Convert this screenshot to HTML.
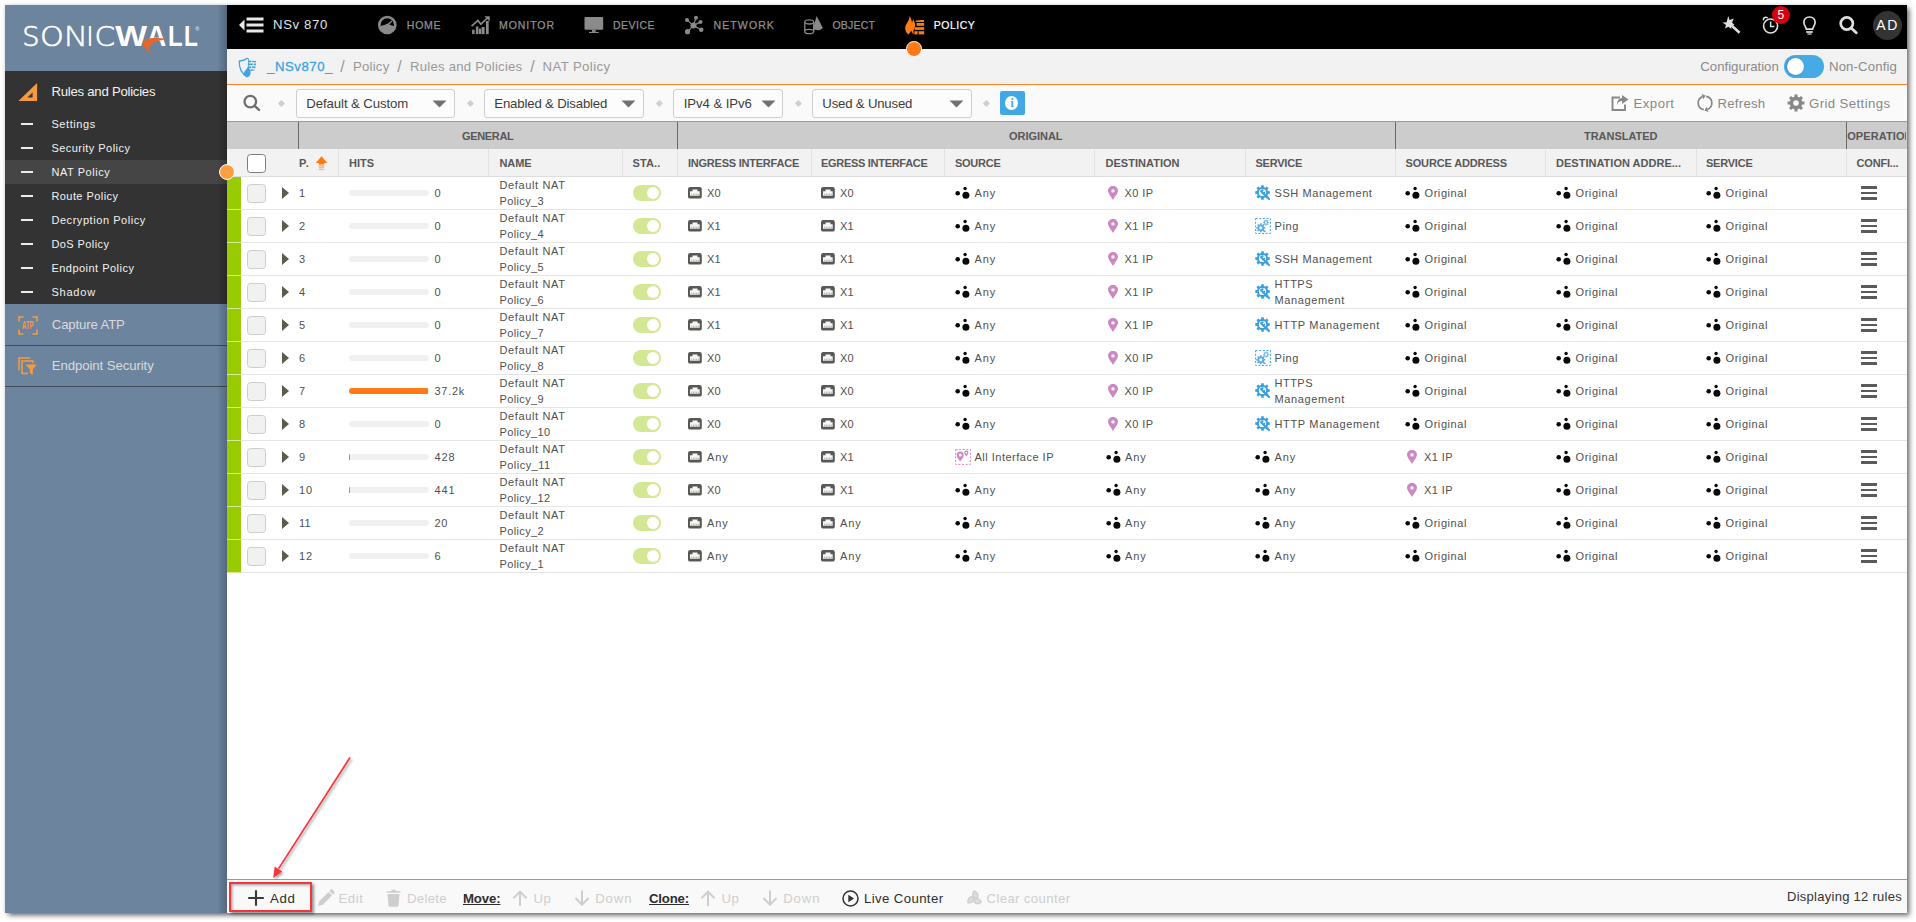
<!DOCTYPE html>
<html><head><meta charset="utf-8"><title>NAT Policy</title>
<style>
html,body{margin:0;padding:0}
body{width:1916px;height:922px;background:#fff;position:relative;overflow:hidden;font-family:"Liberation Sans",sans-serif}
#app{position:absolute;left:5px;top:5px;width:1902px;height:908px;background:#fff;box-shadow:2.5px 2.5px 5px rgba(0,0,0,.55),0 0 4px rgba(0,0,0,.15)}
.b{position:absolute;display:block}
.t{position:absolute;white-space:nowrap}
</style></head><body><div id="app">
<div class="b" style="left:0.00px;top:0.00px;width:222.00px;height:908.00px;background:#6d849f"></div>
<div class="b" style="left:0.00px;top:66.00px;width:222.00px;height:233.00px;background:#333"></div>
<div class="b" style="left:0.00px;top:155.00px;width:222.00px;height:24.00px;background:#454545"></div>
<div class="b" style="left:0.00px;top:339.80px;width:222.00px;height:1.30px;background:#434b55"></div>
<div class="b" style="left:0.00px;top:380.80px;width:222.00px;height:1.30px;background:#434b55"></div>
<div class="b" style="left:212.00px;top:0.00px;width:10.00px;height:908.00px;background:linear-gradient(to right, rgba(0,0,0,0), rgba(0,0,0,.22))"></div>
<svg class="b" style="left:0.00px;top:0.00px;" width="222" height="66" viewBox="0 0 222 66"><text transform="translate(17.18 41.20) scale(1.3578 1.3272)" font-family="'DejaVu Sans','Liberation Sans',sans-serif" font-weight="200" font-size="20.0" fill="#fff" stroke="#fff" stroke-width="0.5">S</text><text transform="translate(35.12 41.20) scale(1.5144 1.3272)" font-family="'DejaVu Sans','Liberation Sans',sans-serif" font-weight="200" font-size="20.0" fill="#fff" stroke="#fff" stroke-width="0.5">O</text><text transform="translate(58.48 41.20) scale(1.6632 1.3357)" font-family="'DejaVu Sans','Liberation Sans',sans-serif" font-weight="200" font-size="20.0" fill="#fff" stroke="#fff" stroke-width="0.25">N</text><text transform="translate(79.49 41.20) scale(1.8627 1.3443)" font-family="'DejaVu Sans','Liberation Sans',sans-serif" font-weight="200" font-size="20.0" fill="#fff">I</text><text transform="translate(89.46 41.20) scale(1.4706 1.3272)" font-family="'DejaVu Sans','Liberation Sans',sans-serif" font-weight="200" font-size="20.0" fill="#fff" stroke="#fff" stroke-width="0.5">C</text><text transform="translate(110.27 41.20) scale(1.6879 1.4608)" font-family="'Liberation Sans',sans-serif" font-weight="700" font-size="20.0" fill="#fff">W</text><text transform="translate(141.61 41.20) scale(1.3711 1.4608)" font-family="'Liberation Sans',sans-serif" font-weight="700" font-size="20.0" fill="#fff">A</text><text transform="translate(162.99 41.20) scale(1.1988 1.4608)" font-family="'Liberation Sans',sans-serif" font-weight="700" font-size="20.0" fill="#fff">L</text><text transform="translate(178.97 41.20) scale(1.1404 1.4608)" font-family="'Liberation Sans',sans-serif" font-weight="700" font-size="20.0" fill="#fff">L</text><path d="M149 46.6 L152 46.6 L153 43 L150 43 Z" fill="#6d849f" transform="translate(-5 -5)"/><path transform="translate(-5 -5)" d="M142.2 43.6 C143.5 41 146 39 151.3 38.1 C156 37.6 162 38 167.8 39.1 C162 40 157.5 41 155 42 C151.5 43.8 149 46 148.7 47.7 C148.7 51 152 53.8 156.5 55.6 C151 54 146.5 50 144 46.7 C143 45.5 142.4 44.5 142.2 43.6 Z" fill="#e4682a"/><text x="190.3" y="25.8" font-size="5.5" fill="#e8edf2" font-family="Liberation Sans, sans-serif">®</text></svg>
<svg class="b" style="left:12.00px;top:77.00px;" width="22" height="21" viewBox="0 0 22 21"><path d="M20.1 1.1 L20.1 19 L1.4 19 Z M15.6 10.6 L15.6 15.5 L10.4 15.5 Z" fill="#f79a3e" fill-rule="evenodd"/></svg>
<div class="t" style="left:46.40px;top:76.90px;height:20px;line-height:20px;font-size:13.2px;color:#f2f2f2;letter-spacing:-0.255px;">Rules and Policies</div>
<div class="b" style="left:15.80px;top:117.70px;width:12.40px;height:2.30px;background:#ececec"></div>
<div class="t" style="left:46.40px;top:109.00px;height:20px;line-height:20px;font-size:11px;color:#f2f2f2;letter-spacing:0.594px;">Settings</div>
<div class="b" style="left:15.80px;top:141.70px;width:12.40px;height:2.30px;background:#ececec"></div>
<div class="t" style="left:46.40px;top:133.00px;height:20px;line-height:20px;font-size:11px;color:#f2f2f2;letter-spacing:0.458px;">Security Policy</div>
<div class="b" style="left:15.80px;top:165.70px;width:12.40px;height:2.30px;background:#ececec"></div>
<div class="t" style="left:46.40px;top:157.00px;height:20px;line-height:20px;font-size:11px;color:#f2f2f2;letter-spacing:0.562px;">NAT Policy</div>
<div class="b" style="left:15.80px;top:189.70px;width:12.40px;height:2.30px;background:#ececec"></div>
<div class="t" style="left:46.40px;top:181.00px;height:20px;line-height:20px;font-size:11px;color:#f2f2f2;letter-spacing:0.437px;">Route Policy</div>
<div class="b" style="left:15.80px;top:213.70px;width:12.40px;height:2.30px;background:#ececec"></div>
<div class="t" style="left:46.40px;top:205.00px;height:20px;line-height:20px;font-size:11px;color:#f2f2f2;letter-spacing:0.560px;">Decryption Policy</div>
<div class="b" style="left:15.80px;top:237.70px;width:12.40px;height:2.30px;background:#ececec"></div>
<div class="t" style="left:46.40px;top:229.00px;height:20px;line-height:20px;font-size:11px;color:#f2f2f2;letter-spacing:0.420px;">DoS Policy</div>
<div class="b" style="left:15.80px;top:261.70px;width:12.40px;height:2.30px;background:#ececec"></div>
<div class="t" style="left:46.40px;top:253.00px;height:20px;line-height:20px;font-size:11px;color:#f2f2f2;letter-spacing:0.478px;">Endpoint Policy</div>
<div class="b" style="left:15.80px;top:285.70px;width:12.40px;height:2.30px;background:#ececec"></div>
<div class="t" style="left:46.40px;top:277.00px;height:20px;line-height:20px;font-size:11px;color:#f2f2f2;letter-spacing:0.791px;">Shadow</div>
<div class="b" style="left:213.90px;top:158.80px;width:16.20px;height:16.20px;background:#fd9f42;border:1.9px solid #fff;border-radius:50%;box-sizing:border-box;z-index:5"></div>
<svg class="b" style="left:13.00px;top:311.00px;" width="20" height="19" viewBox="0 0 20 19"><g fill="none" stroke="#f79a3e" stroke-width="1.6"><path d="M1 5.5V1H5.5M14.5 1H19V5.5M19 13.5V18H14.5M5.5 18H1V13.5"/></g><text x="9.8" y="13.4" font-size="11" font-weight="700" text-anchor="middle" fill="#f79a3e" font-family="Liberation Sans, sans-serif" textLength="11.5" lengthAdjust="spacingAndGlyphs">ATP</text></svg>
<div class="t" style="left:46.80px;top:310.30px;height:20px;line-height:20px;font-size:13.2px;color:#dadada;letter-spacing:-0.145px;">Capture ATP</div>
<svg class="b" style="left:13.00px;top:352.00px;" width="20" height="19" viewBox="0 0 20 19"><g fill="none" stroke="#f79a3e" stroke-width="1.5"><path d="M1 13.4V0.9H12"/><path d="M15 6V4H4V16.4H10"/></g><path d="M7.6 7.4H18.8L14.8 12.2V18L11.8 15.8V12.2Z" fill="#f79a3e"/></svg>
<div class="t" style="left:46.80px;top:351.10px;height:20px;line-height:20px;font-size:13.2px;color:#dadada;letter-spacing:-0.086px;">Endpoint Security</div>
<div class="b" style="left:222.00px;top:0.00px;width:1680.00px;height:44.00px;background:#000"></div>
<svg class="b" style="left:233.00px;top:11.00px;" width="27" height="18" viewBox="0 0 27 18"><path d="M1 9 L6.5 3.5 V14.5Z" fill="#e8e8e8"/><rect x="8.5" y="1.5" width="17" height="3" fill="#e8e8e8"/><rect x="8.5" y="7.5" width="17" height="3" fill="#e8e8e8"/><rect x="8.5" y="13.5" width="17" height="3" fill="#e8e8e8"/></svg>
<div class="t" style="left:268.00px;top:9.80px;height:20px;line-height:20px;font-size:13.2px;color:#e0e0e0;letter-spacing:0.625px;">NSv 870</div>
<svg class="b" style="left:372.00px;top:10.00px;" width="20" height="20" viewBox="0 0 20 20"><circle cx="10.3" cy="10" r="8" fill="none" stroke="#8a8a8a" stroke-width="2.6"/><path d="M2.3 11.6 C4.5 10.6 6.5 10.2 8.3 9.8 C9 8.6 11 8.4 12 9.6 C13.8 10.2 16 10.8 18.3 11.6 C17.8 16 14.5 18.6 10.3 18.6 C6 18.6 2.8 16 2.3 11.6 Z" fill="#8a8a8a"/><path d="M9.8 9.6 L14.6 5.4 L15.4 6.2 L11.4 10.8 Z" fill="#8a8a8a"/></svg>
<div class="t" style="left:401.80px;top:10.00px;height:20px;line-height:20px;font-size:10.5px;color:#8f8f8f;letter-spacing:0.750px;-webkit-text-stroke:0.25px #8f8f8f;">HOME</div>
<svg class="b" style="left:465.00px;top:10.00px;" width="21" height="20" viewBox="0 0 21 20"><g fill="#8a8a8a"><rect x="2.1" y="14.7" width="2.5" height="4.4"/><rect x="5.9" y="11.5" width="2.6" height="7.6"/><rect x="11.6" y="12" width="3" height="7.1"/><rect x="16" y="6" width="2.7" height="13.1"/><rect x="9" y="13.6" width="2.2" height="5.5"/></g><path d="M1.6 11.2 L7.9 5.4 L10.9 9.2 L17.4 3" fill="none" stroke="#8a8a8a" stroke-width="1.7"/><path d="M14.4 1.2 H19.7 V6.6 Z" fill="#8a8a8a"/></svg>
<div class="t" style="left:494.00px;top:10.00px;height:20px;line-height:20px;font-size:10.5px;color:#8f8f8f;letter-spacing:0.945px;-webkit-text-stroke:0.25px #8f8f8f;">MONITOR</div>
<svg class="b" style="left:578.00px;top:10.00px;" width="21" height="20" viewBox="0 0 21 20"><rect x="1.5" y="2" width="18.7" height="12.7" rx="1" fill="#8a8a8a"/><rect x="9" y="14.7" width="3.7" height="2.2" fill="#8a8a8a"/><rect x="6" y="16.9" width="9.7" height="1.1" fill="#8a8a8a"/></svg>
<div class="t" style="left:608.00px;top:10.00px;height:20px;line-height:20px;font-size:10.5px;color:#8f8f8f;letter-spacing:0.484px;-webkit-text-stroke:0.25px #8f8f8f;">DEVICE</div>
<svg class="b" style="left:678.00px;top:9.00px;" width="22" height="22" viewBox="0 0 22 22"><g stroke="#8a8a8a" stroke-width="1.2"><path d="M10.4 11.6 L4 5.9M10.4 11.6 L13 3.8M10.4 11.6 L17.5 7.9M10.4 11.6 L18.2 15.7M10.4 11.6 L4.5 17.7"/></g><g fill="#8a8a8a"><circle cx="10.4" cy="11.6" r="3"/><circle cx="4" cy="5.9" r="2"/><circle cx="13" cy="3.8" r="2"/><circle cx="17.5" cy="7.9" r="2"/><circle cx="18.2" cy="15.7" r="2.3"/><circle cx="4.5" cy="17.7" r="2.6"/></g></svg>
<div class="t" style="left:708.50px;top:10.00px;height:20px;line-height:20px;font-size:10.5px;color:#8f8f8f;letter-spacing:1.119px;-webkit-text-stroke:0.25px #8f8f8f;">NETWORK</div>
<svg class="b" style="left:798.00px;top:9.00px;" width="22" height="22" viewBox="0 0 22 22"><path d="M13.6 2 L19.8 13.7 C18.5 16.8 12 16.8 10 14.5 Z" fill="#8a8a8a"/><g fill="#000" stroke="#8a8a8a" stroke-width="1.3"><path d="M1.8 7.9 V17.7 C1.8 20.3 10.7 20.3 10.7 17.7 V7.9"/><ellipse cx="6.25" cy="7.9" rx="4.45" ry="2.1"/><path d="M1.8 17.2 C1.8 14.8 10.7 14.8 10.7 17.2" fill="none"/></g></svg>
<div class="t" style="left:827.50px;top:10.00px;height:20px;line-height:20px;font-size:10.5px;color:#8f8f8f;letter-spacing:0.180px;-webkit-text-stroke:0.25px #8f8f8f;">OBJECT</div>
<svg class="b" style="left:898.00px;top:9.00px;" width="23" height="22" viewBox="0 0 23 22"><path d="M6.6 2 C8.2 4.5 8.6 6.5 9 8.5 C9.8 7.2 10 6 10 5 C11.5 7.5 12.4 10 12 12.5 C11.8 14 11.2 15 10.6 16 C10.2 17.6 10.6 19 11.4 20.5 C9.5 19.5 8.6 18.2 8.4 16.6 C7.6 18 6.6 19.2 5.6 20.5 C3.2 18.8 1.8 16.2 2.2 13.4 C2.8 9.6 6.2 7.6 6.6 2 Z" fill="#ff7a14"/><g fill="#ff7a14"><path d="M12.2 7 C14 6.2 18 6 21 6 V8 H13 Z"/><rect x="13.6" y="9" width="7.6" height="2.8"/><rect x="11.6" y="13.2" width="9.6" height="2.7"/><rect x="11.4" y="17.2" width="3.2" height="3.2"/><rect x="15.6" y="17.2" width="5.6" height="3.2"/></g></svg>
<div class="t" style="left:928.80px;top:10.00px;height:20px;line-height:20px;font-size:10.5px;color:#fff;letter-spacing:0.498px;-webkit-text-stroke:0.2px #fff;">POLICY</div>
<div class="b" style="left:222.00px;top:44.00px;width:1680.00px;height:1.00px;background:#fff"></div>
<div class="b" style="left:901.20px;top:36.20px;width:15.60px;height:15.60px;background:#ff7a14;border:1.7px solid #fff;border-radius:50%;box-sizing:border-box;z-index:5"></div>
<svg class="b" style="left:1715.00px;top:9.00px;" width="22" height="22" viewBox="0 0 22 22"><path d="M8.2 2 L9.6 6 L13.8 4.6 L12 8.4 L14.6 11 L11 11.4 L11.4 15 L8.4 12.8 L5 14.6 L6 11 L2.6 8.6 L6.6 8.2 Z" fill="#dedede"/><path d="M11 11 L19.6 18.8" stroke="#dedede" stroke-width="2.6" stroke-linecap="butt"/></svg>
<svg class="b" style="left:1754.00px;top:9.00px;" width="22" height="22" viewBox="0 0 22 22"><circle cx="11.6" cy="12" r="7" fill="none" stroke="#dedede" stroke-width="1.6"/><path d="M11.6 7.6 V12.4 H15.4" fill="none" stroke="#dedede" stroke-width="1.5"/><path d="M4.4 5.6 C4.6 3.6 6.6 2.6 8.2 3.6" stroke="#dedede" stroke-width="1.6" fill="none" stroke-linecap="round"/></svg>
<div class="b" style="left:1767.00px;top:0.80px;width:18.00px;height:18.00px;background:#d9000d;border-radius:50%"></div>
<div class="t" style="left:1772.60px;top:-0.10px;height:20px;line-height:20px;font-size:12px;color:#fff;">5</div>
<svg class="b" style="left:1793.00px;top:9.00px;" width="22" height="22" viewBox="0 0 22 22"><path d="M11.5 3 C7.8 3 5.9 5.6 5.9 8.6 C5.9 11.2 7.8 12.4 8.4 15.2 H14.6 C15.2 12.4 17.1 11.2 17.1 8.6 C17.1 5.6 15.2 3 11.5 3 Z" fill="none" stroke="#dedede" stroke-width="1.7"/><path d="M8.2 18 H14.8" stroke="#dedede" stroke-width="1.7"/><path d="M9.4 20 H13.6" stroke="#dedede" stroke-width="1.2"/></svg>
<svg class="b" style="left:1831.00px;top:9.00px;" width="22" height="22" viewBox="0 0 22 22"><circle cx="10.8" cy="9.5" r="6.1" fill="none" stroke="#dedede" stroke-width="2.7"/><path d="M15.2 14 L20.2 18.8" stroke="#dedede" stroke-width="2.8" stroke-linecap="round"/></svg>
<div class="b" style="left:1867.80px;top:5.50px;width:29.00px;height:29.00px;background:#333;border-radius:50%"></div>
<div class="t" style="left:1871.30px;top:9.70px;height:20px;line-height:20px;font-size:14px;color:#fff;letter-spacing:1.576px;">AD</div>
<div class="b" style="left:222.00px;top:44.00px;width:1680.00px;height:35.00px;background:#f2f2f2"></div>
<div class="b" style="left:222.00px;top:78.70px;width:1680.00px;height:1.50px;background:#ff8124"></div>
<svg class="b" style="left:233.00px;top:51.50px;" width="19" height="21" viewBox="0 0 19 21"><path d="M9.7 1.1 C7 3 4 3.8 1.3 4 C0.9 11 3.2 16.4 9.5 20.2" fill="none" stroke="#41a4e3" stroke-width="1.3"/><clipPath id="shc"><path d="M9.9 0.8 C12.4 3 15.4 3.8 18 4 C18.4 11 16.2 16.6 9.9 20.4 Z"/></clipPath><g clip-path="url(#shc)" fill="#41a4e3"><rect x="10" y="3.6" width="3.4" height="1.7"/><rect x="14.3" y="3.6" width="4" height="1.7"/><rect x="9.2" y="6.5" width="5.6" height="1.7"/><rect x="15.7" y="6.5" width="3" height="1.7"/><rect x="10.6" y="9.4" width="2.6" height="1.7"/><rect x="14.1" y="9.4" width="4" height="1.7"/><rect x="12.4" y="12.3" width="2.4" height="1.7"/><rect x="15.6" y="12.3" width="2" height="1.7"/><rect x="9.9" y="0" width="0.9" height="12"/></g><path d="M9.4 20 C6.6 19.6 5.4 17.4 6 15.4 C6.6 13.4 9 12.6 9.8 9.6 C11.6 11.4 13 14 12.6 16.4 C12.3 18.4 11 19.6 9.4 20 Z" fill="#41a4e3"/></svg>
<div class="t" style="left:262.00px;top:52.20px;height:20px;line-height:20px;font-size:13.2px;color:#3da2df;letter-spacing:0.545px;-webkit-text-stroke:0.3px #3da2df;">_NSv870_</div>
<div class="t" style="left:335.20px;top:51.90px;height:20px;line-height:20px;font-size:16px;color:#999;">/</div>
<div class="t" style="left:348.00px;top:52.20px;height:20px;line-height:20px;font-size:13.2px;color:#999;letter-spacing:0.215px;">Policy</div>
<div class="t" style="left:392.20px;top:51.90px;height:20px;line-height:20px;font-size:16px;color:#999;">/</div>
<div class="t" style="left:405.00px;top:52.20px;height:20px;line-height:20px;font-size:13.2px;color:#999;letter-spacing:0.217px;">Rules and Policies</div>
<div class="t" style="left:525.20px;top:51.90px;height:20px;line-height:20px;font-size:16px;color:#999;">/</div>
<div class="t" style="left:537.50px;top:52.20px;height:20px;line-height:20px;font-size:13.2px;color:#999;letter-spacing:0.394px;">NAT Policy</div>
<div class="t" style="left:1695.30px;top:52.10px;height:20px;line-height:20px;font-size:13.2px;color:#8a8a8a;letter-spacing:-0.001px;">Configuration</div>
<div class="b" style="left:1779.00px;top:50.00px;width:39.80px;height:23.00px;background:#45aae6;border-radius:12px"></div>
<div class="b" style="left:1781.60px;top:52.70px;width:17.60px;height:17.60px;background:#fff;border-radius:50%;box-shadow:-0.5px 0 1.5px rgba(0,0,0,.35)"></div>
<div class="t" style="left:1824.00px;top:52.10px;height:20px;line-height:20px;font-size:13.2px;color:#8a8a8a;letter-spacing:0.123px;">Non-Config</div>
<div class="b" style="left:222.00px;top:80.00px;width:1680.00px;height:36.00px;background:#fafafa"></div>
<svg class="b" style="left:236.00px;top:88.00px;" width="20" height="20" viewBox="0 0 20 20"><circle cx="9.3" cy="8.6" r="5.8" fill="none" stroke="#6f6f6f" stroke-width="2.3"/><path d="M13.6 12.8 L18 16.8" stroke="#6f6f6f" stroke-width="2.5" stroke-linecap="round"/></svg>
<div class="b" style="left:273.60px;top:95.80px;width:4.80px;height:4.80px;background:#cfcfcf;transform:rotate(45deg)"></div>
<div class="b" style="left:462.60px;top:95.80px;width:4.80px;height:4.80px;background:#cfcfcf;transform:rotate(45deg)"></div>
<div class="b" style="left:651.60px;top:95.80px;width:4.80px;height:4.80px;background:#cfcfcf;transform:rotate(45deg)"></div>
<div class="b" style="left:790.60px;top:95.80px;width:4.80px;height:4.80px;background:#cfcfcf;transform:rotate(45deg)"></div>
<div class="b" style="left:978.60px;top:95.80px;width:4.80px;height:4.80px;background:#cfcfcf;transform:rotate(45deg)"></div>
<div class="b" style="left:290.50px;top:84.00px;width:159.00px;height:28.50px;background:#fcfcfc;border:1px solid #cfcfcf;border-radius:3px;box-sizing:border-box"></div>
<div class="t" style="left:301.30px;top:88.50px;height:20px;line-height:20px;font-size:13.2px;color:#3c3c3c;letter-spacing:-0.090px;">Default &amp; Custom</div>
<svg class="b" style="left:427.00px;top:94.50px;" width="15" height="8" viewBox="0 0 15 8"><path d="M0.5 0.5 H14.5 L7.5 7.5 Z" fill="#707070"/></svg>
<div class="b" style="left:478.50px;top:84.00px;width:160.00px;height:28.50px;background:#fcfcfc;border:1px solid #cfcfcf;border-radius:3px;box-sizing:border-box"></div>
<div class="t" style="left:489.30px;top:88.50px;height:20px;line-height:20px;font-size:13.2px;color:#3c3c3c;letter-spacing:-0.164px;">Enabled &amp; Disabled</div>
<svg class="b" style="left:616.00px;top:94.50px;" width="15" height="8" viewBox="0 0 15 8"><path d="M0.5 0.5 H14.5 L7.5 7.5 Z" fill="#707070"/></svg>
<div class="b" style="left:668.00px;top:84.00px;width:110.00px;height:28.50px;background:#fcfcfc;border:1px solid #cfcfcf;border-radius:3px;box-sizing:border-box"></div>
<div class="t" style="left:678.80px;top:88.50px;height:20px;line-height:20px;font-size:13.2px;color:#3c3c3c;letter-spacing:-0.088px;">IPv4 &amp; IPv6</div>
<svg class="b" style="left:755.50px;top:94.50px;" width="15" height="8" viewBox="0 0 15 8"><path d="M0.5 0.5 H14.5 L7.5 7.5 Z" fill="#707070"/></svg>
<div class="b" style="left:806.50px;top:84.00px;width:160.00px;height:28.50px;background:#fcfcfc;border:1px solid #cfcfcf;border-radius:3px;box-sizing:border-box"></div>
<div class="t" style="left:817.30px;top:88.50px;height:20px;line-height:20px;font-size:13.2px;color:#3c3c3c;letter-spacing:-0.189px;">Used &amp; Unused</div>
<svg class="b" style="left:944.00px;top:94.50px;" width="15" height="8" viewBox="0 0 15 8"><path d="M0.5 0.5 H14.5 L7.5 7.5 Z" fill="#707070"/></svg>
<div class="b" style="left:995.00px;top:86.00px;width:24.50px;height:23.50px;background:#41a8e3;border-radius:2px"></div>
<div class="b" style="left:1000.00px;top:90.50px;width:13.20px;height:14.50px;background:#fff;border-radius:50%"></div>
<div class="t" style="left:1005.60px;top:88.00px;height:20px;line-height:20px;font-size:11.5px;color:#41a8e3;font-weight:700;font-family:'Liberation Serif',serif;">i</div>
<svg class="b" style="left:1605.00px;top:89.00px;" width="19" height="18" viewBox="0 0 19 18"><path d="M10 3.5 H2.5 V16 H15 V10.5" fill="none" stroke="#888" stroke-width="1.9"/><path d="M12 1 L18.5 5.5 L12 10 V7 C9.5 7 8 8.5 7 11 C7 7 9 4.2 12 4 Z" fill="#888"/></svg>
<div class="t" style="left:1628.50px;top:88.60px;height:20px;line-height:20px;font-size:13.2px;color:#888;letter-spacing:0.475px;">Export</div>
<svg class="b" style="left:1690.00px;top:89.00px;" width="20" height="19" viewBox="0 0 20 19"><g fill="none" stroke="#888" stroke-width="1.7"><path d="M7.67 2.61 A6.8 6.8 0 0 0 8.82 15.7"/><path d="M12.33 15.39 A6.8 6.8 0 0 0 11.18 2.3"/></g><path d="M10.6 1.5 L6.6 0.1 L8.4 5.2 Z M9.4 16.5 L13.4 17.9 L11.6 12.8 Z" fill="#888"/></svg>
<div class="t" style="left:1712.50px;top:88.60px;height:20px;line-height:20px;font-size:13.2px;color:#888;letter-spacing:0.254px;">Refresh</div>
<svg class="b" style="left:1782.20px;top:89.20px;" width="18" height="18" viewBox="0 0 18 18"><path d="M17.47 7.52 L17.47 10.48 L15.20 10.59 L14.51 12.26 L16.04 13.95 L13.95 16.04 L12.26 14.51 L10.59 15.20 L10.48 17.47 L7.52 17.47 L7.41 15.20 L5.74 14.51 L4.05 16.04 L1.96 13.95 L3.49 12.26 L2.80 10.59 L0.53 10.48 L0.53 7.52 L2.80 7.41 L3.49 5.74 L1.96 4.05 L4.05 1.96 L5.74 3.49 L7.41 2.80 L7.52 0.53 L10.48 0.53 L10.59 2.80 L12.26 3.49 L13.95 1.96 L16.04 4.05 L14.51 5.74 L15.20 7.41Z M6.20 9.00 a2.80 2.80 0 1 0 5.60 0 a2.80 2.80 0 1 0 -5.60 0Z" fill="#888" fill-rule="evenodd"/></svg>
<div class="t" style="left:1804.00px;top:88.60px;height:20px;line-height:20px;font-size:13.2px;color:#888;letter-spacing:0.400px;">Grid Settings</div>
<div class="b" style="left:222.00px;top:116.00px;width:1680.00px;height:28.00px;background:#cccccc"></div>
<div class="b" style="left:222.00px;top:116.00px;width:1680.00px;height:1.00px;background:#9a9a9a"></div>
<div class="b" style="left:293.00px;top:117.00px;width:1.00px;height:27.00px;background:#6a6a6a"></div>
<div class="b" style="left:672.00px;top:117.00px;width:1.00px;height:27.00px;background:#6a6a6a"></div>
<div class="b" style="left:1389.50px;top:117.00px;width:1.00px;height:27.00px;background:#6a6a6a"></div>
<div class="b" style="left:1840.50px;top:117.00px;width:1.00px;height:27.00px;background:#6a6a6a"></div>
<div class="t" style="left:457.00px;top:120.50px;height:20px;line-height:20px;font-size:11px;color:#585858;font-weight:700;letter-spacing:-0.326px;">GENERAL</div>
<div class="t" style="left:1004.00px;top:120.50px;height:20px;line-height:20px;font-size:11px;color:#585858;font-weight:700;letter-spacing:-0.034px;">ORIGINAL</div>
<div class="t" style="left:1579.00px;top:120.50px;height:20px;line-height:20px;font-size:11px;color:#585858;font-weight:700;letter-spacing:-0.023px;">TRANSLATED</div>
<div class="b" style="left:1841px;top:116px;width:60px;height:28px;overflow:hidden">
<div class="t" style="left:1.2px;top:4.7px;height:20px;line-height:20px;font-size:11px;color:#585858;font-weight:700;letter-spacing:0.1px">OPERATIONS</div></div>
<div class="b" style="left:222.00px;top:144.00px;width:1680.00px;height:27.00px;background:#f2f2f2"></div>
<div class="b" style="left:222.00px;top:171.00px;width:1680.00px;height:1.00px;background:#dedede"></div>
<div class="b" style="left:333.00px;top:144.00px;width:1.00px;height:27.00px;background:#e2e2e2"></div>
<div class="b" style="left:483.00px;top:144.00px;width:1.00px;height:27.00px;background:#e2e2e2"></div>
<div class="b" style="left:617.00px;top:144.00px;width:1.00px;height:27.00px;background:#e2e2e2"></div>
<div class="b" style="left:672.00px;top:144.00px;width:1.00px;height:27.00px;background:#e2e2e2"></div>
<div class="b" style="left:806.00px;top:144.00px;width:1.00px;height:27.00px;background:#e2e2e2"></div>
<div class="b" style="left:939.00px;top:144.00px;width:1.00px;height:27.00px;background:#e2e2e2"></div>
<div class="b" style="left:1089.00px;top:144.00px;width:1.00px;height:27.00px;background:#e2e2e2"></div>
<div class="b" style="left:1240.00px;top:144.00px;width:1.00px;height:27.00px;background:#e2e2e2"></div>
<div class="b" style="left:1390.00px;top:144.00px;width:1.00px;height:27.00px;background:#e2e2e2"></div>
<div class="b" style="left:1540.00px;top:144.00px;width:1.00px;height:27.00px;background:#e2e2e2"></div>
<div class="b" style="left:1691.00px;top:144.00px;width:1.00px;height:27.00px;background:#e2e2e2"></div>
<div class="b" style="left:1841.00px;top:144.00px;width:1.00px;height:27.00px;background:#e2e2e2"></div>
<div class="b" style="left:242.00px;top:149.00px;width:19.00px;height:19.00px;background:#fff;border:1.2px solid #7c7c7c;border-radius:3.5px;box-sizing:border-box"></div>
<div class="t" style="left:294.00px;top:148.00px;height:20px;line-height:20px;font-size:11px;color:#585858;font-weight:700;letter-spacing:0.762px;">P.</div>
<svg class="b" style="left:309.50px;top:151.00px;" width="13" height="15" viewBox="0 0 13 15"><path d="M6.5 0.3 L12.3 7 H9.2 V8.6 H3.8 V7 H0.7 Z" fill="#ff7a14"/><rect x="3.8" y="9.4" width="5.4" height="1.1" fill="#ff9a4d"/><rect x="3.8" y="11.2" width="5.4" height="1.1" fill="#ffa866"/><rect x="3.8" y="13" width="5.4" height="1.1" fill="#ffb980"/></svg>
<div class="t" style="left:344.00px;top:148.00px;height:20px;line-height:20px;font-size:11px;color:#585858;font-weight:700;letter-spacing:-0.014px;">HITS</div>
<div class="t" style="left:494.50px;top:148.00px;height:20px;line-height:20px;font-size:11px;color:#585858;font-weight:700;letter-spacing:-0.097px;">NAME</div>
<div class="t" style="left:627.50px;top:148.00px;height:20px;line-height:20px;font-size:11px;color:#585858;font-weight:700;letter-spacing:0.141px;">STA..</div>
<div class="t" style="left:683.00px;top:148.00px;height:20px;line-height:20px;font-size:11px;color:#585858;font-weight:700;letter-spacing:-0.230px;">INGRESS INTERFACE</div>
<div class="t" style="left:816.00px;top:148.00px;height:20px;line-height:20px;font-size:11px;color:#585858;font-weight:700;letter-spacing:-0.296px;">EGRESS INTERFACE</div>
<div class="t" style="left:950.00px;top:148.00px;height:20px;line-height:20px;font-size:11px;color:#585858;font-weight:700;letter-spacing:-0.260px;">SOURCE</div>
<div class="t" style="left:1100.50px;top:148.00px;height:20px;line-height:20px;font-size:11px;color:#585858;font-weight:700;letter-spacing:0.024px;">DESTINATION</div>
<div class="t" style="left:1250.50px;top:148.00px;height:20px;line-height:20px;font-size:11px;color:#585858;font-weight:700;letter-spacing:-0.228px;">SERVICE</div>
<div class="t" style="left:1400.50px;top:148.00px;height:20px;line-height:20px;font-size:11px;color:#585858;font-weight:700;letter-spacing:-0.143px;">SOURCE ADDRESS</div>
<div class="t" style="left:1551.00px;top:148.00px;height:20px;line-height:20px;font-size:11px;color:#585858;font-weight:700;letter-spacing:0.017px;">DESTINATION ADDRE...</div>
<div class="t" style="left:1701.00px;top:148.00px;height:20px;line-height:20px;font-size:11px;color:#585858;font-weight:700;letter-spacing:-0.228px;">SERVICE</div>
<div class="t" style="left:1851.50px;top:148.00px;height:20px;line-height:20px;font-size:11px;color:#585858;font-weight:700;letter-spacing:-0.173px;">CONFI...</div>
<div class="b" style="left:222.00px;top:172.00px;width:14.00px;height:32.00px;background:#99cc00"></div>
<div class="b" style="left:222.00px;top:204.00px;width:14.00px;height:1.00px;background:#d6eb99"></div>
<div class="b" style="left:236.00px;top:204.00px;width:1666.00px;height:1.00px;background:#e6e6e6"></div>
<div class="b" style="left:242.00px;top:179.00px;width:19.00px;height:19.00px;background:#f1f1f1;border:1px solid #cdcdcd;border-radius:3.5px;box-sizing:border-box"></div>
<svg class="b" style="left:277.00px;top:182.00px;" width="7" height="12" viewBox="0 0 7 12"><path d="M0 0 L7 6 L0 12 Z" fill="#5c5c4e"/></svg>
<div class="t" style="left:294.00px;top:180.00px;height:16px;line-height:16px;font-size:11px;color:#505050;letter-spacing:-1.118px;">1</div>
<div class="b" style="left:344.00px;top:185.00px;width:79.50px;height:6.00px;background:#f0f0f0;border-radius:3px"></div>
<div class="t" style="left:429.50px;top:180.00px;height:16px;line-height:16px;font-size:11px;color:#505050;letter-spacing:0.382px;">0</div>
<div class="t" style="left:494.50px;top:172.00px;height:16px;line-height:16px;font-size:11px;color:#505050;letter-spacing:0.628px;">Default NAT</div>
<div class="t" style="left:494.50px;top:188.00px;height:16px;line-height:16px;font-size:11px;color:#505050;letter-spacing:0.365px;">Policy_3</div>
<div class="b" style="left:628.00px;top:179.90px;width:28.00px;height:16.00px;background:#d3e794;border-radius:8px"></div>
<div class="b" style="left:641.90px;top:181.80px;width:12.20px;height:12.20px;background:#fff;border-radius:50%"></div>
<svg class="b" style="left:683.10px;top:182.10px;" width="14" height="12" viewBox="0 0 14 12"><rect x="0" y="0" width="13.8" height="11.6" rx="2.2" fill="#585858"/><path d="M4.5 2.6 H9.5 V4.2 H11.7 V8.7 H2 V4.2 H4.5 Z" fill="#f6f6f6"/><g><rect x="3.2" y="6.6" width="0.9" height="2.1" fill="#e0b070"/><rect x="4.9" y="6.6" width="0.9" height="2.1" fill="#8fb0e0"/><rect x="6.6" y="6.6" width="0.9" height="2.1" fill="#e0b070"/><rect x="8.3" y="6.6" width="0.9" height="2.1" fill="#8fb0e0"/><rect x="10" y="6.6" width="0.9" height="2.1" fill="#e0b070"/></g></svg>
<div class="t" style="left:702.00px;top:180.00px;height:16px;line-height:16px;font-size:11px;color:#505050;letter-spacing:0.273px;">X0</div>
<svg class="b" style="left:816.10px;top:182.10px;" width="14" height="12" viewBox="0 0 14 12"><rect x="0" y="0" width="13.8" height="11.6" rx="2.2" fill="#585858"/><path d="M4.5 2.6 H9.5 V4.2 H11.7 V8.7 H2 V4.2 H4.5 Z" fill="#f6f6f6"/><g><rect x="3.2" y="6.6" width="0.9" height="2.1" fill="#e0b070"/><rect x="4.9" y="6.6" width="0.9" height="2.1" fill="#8fb0e0"/><rect x="6.6" y="6.6" width="0.9" height="2.1" fill="#e0b070"/><rect x="8.3" y="6.6" width="0.9" height="2.1" fill="#8fb0e0"/><rect x="10" y="6.6" width="0.9" height="2.1" fill="#e0b070"/></g></svg>
<div class="t" style="left:835.00px;top:180.00px;height:16px;line-height:16px;font-size:11px;color:#505050;letter-spacing:0.273px;">X0</div>
<svg class="b" style="left:950.00px;top:181.00px;" width="15" height="14" viewBox="0 0 15 14"><circle cx="2.7" cy="7.2" r="2.3" fill="#0a0a0a"/><circle cx="10.1" cy="2.5" r="1.7" fill="#0a0a0a"/><circle cx="10.9" cy="9.3" r="3.5" fill="#0a0a0a"/></svg>
<div class="t" style="left:969.50px;top:180.00px;height:16px;line-height:16px;font-size:11px;color:#505050;letter-spacing:0.848px;">Any</div>
<svg class="b" style="left:1102.50px;top:180.90px;" width="10" height="14" viewBox="0 0 10 14"><path d="M5 0 C2 0 0 2.1 0 4.8 C0 7.6 2.8 10.4 5 13.9 C7.2 10.4 10 7.6 10 4.8 C10 2.1 8 0 5 0 Z M5 3.2 A1.7 1.7 0 1 1 5 6.6 A1.7 1.7 0 1 1 5 3.2 Z" fill="#cc88c4" fill-rule="evenodd"/></svg>
<div class="t" style="left:1119.50px;top:180.00px;height:16px;line-height:16px;font-size:11px;color:#505050;letter-spacing:0.419px;">X0 IP</div>
<svg class="b" style="left:1250.00px;top:180.00px;" width="16" height="16" viewBox="0 0 16 16"><path d="M14.79 6.23 L14.79 8.77 L12.92 8.89 L12.32 10.35 L13.55 11.76 L11.76 13.55 L10.35 12.32 L8.89 12.92 L8.77 14.79 L6.23 14.79 L6.11 12.92 L4.65 12.32 L3.24 13.55 L1.45 11.76 L2.68 10.35 L2.08 8.89 L0.21 8.77 L0.21 6.23 L2.08 6.11 L2.68 4.65 L1.45 3.24 L3.24 1.45 L4.65 2.68 L6.11 2.08 L6.23 0.21 L8.77 0.21 L8.89 2.08 L10.35 2.68 L11.76 1.45 L13.55 3.24 L12.32 4.65 L12.92 6.11Z M4.10 7.50 a3.40 3.40 0 1 0 6.80 0 a3.40 3.40 0 1 0 -6.80 0Z" fill="#3c9fe0" fill-rule="evenodd"/><circle cx="7.5" cy="7.5" r="3.6" fill="#fff"/><path d="M5 6.5 A2.4 2.4 0 0 1 9 5 L7.6 6.6 L8.6 7.6 L10.2 6.2 A2.4 2.4 0 0 1 7.6 9.2 Z" fill="#3c9fe0"/><path d="M8.5 8.5 L14 14" stroke="#3c9fe0" stroke-width="2.2" stroke-linecap="round"/></svg>
<div class="t" style="left:1269.50px;top:180.00px;height:16px;line-height:16px;font-size:11px;color:#505050;letter-spacing:0.580px;">SSH Management</div>
<svg class="b" style="left:1400.00px;top:181.00px;" width="15" height="14" viewBox="0 0 15 14"><circle cx="2.7" cy="7.2" r="2.3" fill="#0a0a0a"/><circle cx="10.1" cy="2.5" r="1.7" fill="#0a0a0a"/><circle cx="10.9" cy="9.3" r="3.5" fill="#0a0a0a"/></svg>
<div class="t" style="left:1419.50px;top:180.00px;height:16px;line-height:16px;font-size:11px;color:#505050;letter-spacing:0.574px;">Original</div>
<svg class="b" style="left:1551.00px;top:181.00px;" width="15" height="14" viewBox="0 0 15 14"><circle cx="2.7" cy="7.2" r="2.3" fill="#0a0a0a"/><circle cx="10.1" cy="2.5" r="1.7" fill="#0a0a0a"/><circle cx="10.9" cy="9.3" r="3.5" fill="#0a0a0a"/></svg>
<div class="t" style="left:1570.50px;top:180.00px;height:16px;line-height:16px;font-size:11px;color:#505050;letter-spacing:0.574px;">Original</div>
<svg class="b" style="left:1701.00px;top:181.00px;" width="15" height="14" viewBox="0 0 15 14"><circle cx="2.7" cy="7.2" r="2.3" fill="#0a0a0a"/><circle cx="10.1" cy="2.5" r="1.7" fill="#0a0a0a"/><circle cx="10.9" cy="9.3" r="3.5" fill="#0a0a0a"/></svg>
<div class="t" style="left:1720.50px;top:180.00px;height:16px;line-height:16px;font-size:11px;color:#505050;letter-spacing:0.574px;">Original</div>
<div class="b" style="left:1855.80px;top:180.90px;width:16.30px;height:2.80px;background:#5a5a5a"></div>
<div class="b" style="left:1855.80px;top:186.60px;width:16.30px;height:2.80px;background:#5a5a5a"></div>
<div class="b" style="left:1855.80px;top:192.30px;width:16.30px;height:2.80px;background:#5a5a5a"></div>
<div class="b" style="left:222.00px;top:205.00px;width:14.00px;height:32.00px;background:#99cc00"></div>
<div class="b" style="left:222.00px;top:237.00px;width:14.00px;height:1.00px;background:#d6eb99"></div>
<div class="b" style="left:236.00px;top:237.00px;width:1666.00px;height:1.00px;background:#e6e6e6"></div>
<div class="b" style="left:242.00px;top:212.00px;width:19.00px;height:19.00px;background:#f1f1f1;border:1px solid #cdcdcd;border-radius:3.5px;box-sizing:border-box"></div>
<svg class="b" style="left:277.00px;top:215.00px;" width="7" height="12" viewBox="0 0 7 12"><path d="M0 0 L7 6 L0 12 Z" fill="#5c5c4e"/></svg>
<div class="t" style="left:294.00px;top:213.00px;height:16px;line-height:16px;font-size:11px;color:#505050;letter-spacing:0.382px;">2</div>
<div class="b" style="left:344.00px;top:218.00px;width:79.50px;height:6.00px;background:#f0f0f0;border-radius:3px"></div>
<div class="t" style="left:429.50px;top:213.00px;height:16px;line-height:16px;font-size:11px;color:#505050;letter-spacing:0.382px;">0</div>
<div class="t" style="left:494.50px;top:205.00px;height:16px;line-height:16px;font-size:11px;color:#505050;letter-spacing:0.628px;">Default NAT</div>
<div class="t" style="left:494.50px;top:221.00px;height:16px;line-height:16px;font-size:11px;color:#505050;letter-spacing:0.365px;">Policy_4</div>
<div class="b" style="left:628.00px;top:212.90px;width:28.00px;height:16.00px;background:#d3e794;border-radius:8px"></div>
<div class="b" style="left:641.90px;top:214.80px;width:12.20px;height:12.20px;background:#fff;border-radius:50%"></div>
<svg class="b" style="left:683.10px;top:215.10px;" width="14" height="12" viewBox="0 0 14 12"><rect x="0" y="0" width="13.8" height="11.6" rx="2.2" fill="#585858"/><path d="M4.5 2.6 H9.5 V4.2 H11.7 V8.7 H2 V4.2 H4.5 Z" fill="#f6f6f6"/><g><rect x="3.2" y="6.6" width="0.9" height="2.1" fill="#e0b070"/><rect x="4.9" y="6.6" width="0.9" height="2.1" fill="#8fb0e0"/><rect x="6.6" y="6.6" width="0.9" height="2.1" fill="#e0b070"/><rect x="8.3" y="6.6" width="0.9" height="2.1" fill="#8fb0e0"/><rect x="10" y="6.6" width="0.9" height="2.1" fill="#e0b070"/></g></svg>
<div class="t" style="left:702.00px;top:213.00px;height:16px;line-height:16px;font-size:11px;color:#505050;letter-spacing:0.273px;">X1</div>
<svg class="b" style="left:816.10px;top:215.10px;" width="14" height="12" viewBox="0 0 14 12"><rect x="0" y="0" width="13.8" height="11.6" rx="2.2" fill="#585858"/><path d="M4.5 2.6 H9.5 V4.2 H11.7 V8.7 H2 V4.2 H4.5 Z" fill="#f6f6f6"/><g><rect x="3.2" y="6.6" width="0.9" height="2.1" fill="#e0b070"/><rect x="4.9" y="6.6" width="0.9" height="2.1" fill="#8fb0e0"/><rect x="6.6" y="6.6" width="0.9" height="2.1" fill="#e0b070"/><rect x="8.3" y="6.6" width="0.9" height="2.1" fill="#8fb0e0"/><rect x="10" y="6.6" width="0.9" height="2.1" fill="#e0b070"/></g></svg>
<div class="t" style="left:835.00px;top:213.00px;height:16px;line-height:16px;font-size:11px;color:#505050;letter-spacing:0.273px;">X1</div>
<svg class="b" style="left:950.00px;top:214.00px;" width="15" height="14" viewBox="0 0 15 14"><circle cx="2.7" cy="7.2" r="2.3" fill="#0a0a0a"/><circle cx="10.1" cy="2.5" r="1.7" fill="#0a0a0a"/><circle cx="10.9" cy="9.3" r="3.5" fill="#0a0a0a"/></svg>
<div class="t" style="left:969.50px;top:213.00px;height:16px;line-height:16px;font-size:11px;color:#505050;letter-spacing:0.848px;">Any</div>
<svg class="b" style="left:1102.50px;top:213.90px;" width="10" height="14" viewBox="0 0 10 14"><path d="M5 0 C2 0 0 2.1 0 4.8 C0 7.6 2.8 10.4 5 13.9 C7.2 10.4 10 7.6 10 4.8 C10 2.1 8 0 5 0 Z M5 3.2 A1.7 1.7 0 1 1 5 6.6 A1.7 1.7 0 1 1 5 3.2 Z" fill="#cc88c4" fill-rule="evenodd"/></svg>
<div class="t" style="left:1119.50px;top:213.00px;height:16px;line-height:16px;font-size:11px;color:#505050;letter-spacing:0.419px;">X1 IP</div>
<svg class="b" style="left:1250.00px;top:213.00px;" width="16" height="16" viewBox="0 0 16 16"><rect x="0.6" y="0.6" width="14.8" height="14.8" fill="none" stroke="#3c9fe0" stroke-width="1" stroke-dasharray="2 1.6"/><path d="M10.33 9.01 L10.33 10.59 L9.09 10.65 L8.73 11.53 L9.56 12.45 L8.45 13.56 L7.53 12.73 L6.65 13.09 L6.59 14.33 L5.01 14.33 L4.95 13.09 L4.07 12.73 L3.15 13.56 L2.04 12.45 L2.87 11.53 L2.51 10.65 L1.27 10.59 L1.27 9.01 L2.51 8.95 L2.87 8.07 L2.04 7.15 L3.15 6.04 L4.07 6.87 L4.95 6.51 L5.01 5.27 L6.59 5.27 L6.65 6.51 L7.53 6.87 L8.45 6.04 L9.56 7.15 L8.73 8.07 L9.09 8.95Z M4.20 9.80 a1.60 1.60 0 1 0 3.20 0 a1.60 1.60 0 1 0 -3.20 0Z" fill="#58aee6" fill-rule="evenodd"/><path d="M14.15 4.05 L14.15 5.15 L13.23 5.17 L12.98 5.77 L13.62 6.44 L12.84 7.22 L12.17 6.58 L11.57 6.83 L11.55 7.75 L10.45 7.75 L10.43 6.83 L9.83 6.58 L9.16 7.22 L8.38 6.44 L9.02 5.77 L8.77 5.17 L7.85 5.15 L7.85 4.05 L8.77 4.03 L9.02 3.43 L8.38 2.76 L9.16 1.98 L9.83 2.62 L10.43 2.37 L10.45 1.45 L11.55 1.45 L11.57 2.37 L12.17 2.62 L12.84 1.98 L13.62 2.76 L12.98 3.43 L13.23 4.03Z M9.90 4.60 a1.10 1.10 0 1 0 2.20 0 a1.10 1.10 0 1 0 -2.20 0Z" fill="#7dc0ec" fill-rule="evenodd"/><path d="M7 11 L10.5 14" stroke="#58aee6" stroke-width="1.6"/></svg>
<div class="t" style="left:1269.50px;top:213.00px;height:16px;line-height:16px;font-size:11px;color:#505050;letter-spacing:0.621px;">Ping</div>
<svg class="b" style="left:1400.00px;top:214.00px;" width="15" height="14" viewBox="0 0 15 14"><circle cx="2.7" cy="7.2" r="2.3" fill="#0a0a0a"/><circle cx="10.1" cy="2.5" r="1.7" fill="#0a0a0a"/><circle cx="10.9" cy="9.3" r="3.5" fill="#0a0a0a"/></svg>
<div class="t" style="left:1419.50px;top:213.00px;height:16px;line-height:16px;font-size:11px;color:#505050;letter-spacing:0.574px;">Original</div>
<svg class="b" style="left:1551.00px;top:214.00px;" width="15" height="14" viewBox="0 0 15 14"><circle cx="2.7" cy="7.2" r="2.3" fill="#0a0a0a"/><circle cx="10.1" cy="2.5" r="1.7" fill="#0a0a0a"/><circle cx="10.9" cy="9.3" r="3.5" fill="#0a0a0a"/></svg>
<div class="t" style="left:1570.50px;top:213.00px;height:16px;line-height:16px;font-size:11px;color:#505050;letter-spacing:0.574px;">Original</div>
<svg class="b" style="left:1701.00px;top:214.00px;" width="15" height="14" viewBox="0 0 15 14"><circle cx="2.7" cy="7.2" r="2.3" fill="#0a0a0a"/><circle cx="10.1" cy="2.5" r="1.7" fill="#0a0a0a"/><circle cx="10.9" cy="9.3" r="3.5" fill="#0a0a0a"/></svg>
<div class="t" style="left:1720.50px;top:213.00px;height:16px;line-height:16px;font-size:11px;color:#505050;letter-spacing:0.574px;">Original</div>
<div class="b" style="left:1855.80px;top:213.90px;width:16.30px;height:2.80px;background:#5a5a5a"></div>
<div class="b" style="left:1855.80px;top:219.60px;width:16.30px;height:2.80px;background:#5a5a5a"></div>
<div class="b" style="left:1855.80px;top:225.30px;width:16.30px;height:2.80px;background:#5a5a5a"></div>
<div class="b" style="left:222.00px;top:238.00px;width:14.00px;height:32.00px;background:#99cc00"></div>
<div class="b" style="left:222.00px;top:270.00px;width:14.00px;height:1.00px;background:#d6eb99"></div>
<div class="b" style="left:236.00px;top:270.00px;width:1666.00px;height:1.00px;background:#e6e6e6"></div>
<div class="b" style="left:242.00px;top:245.00px;width:19.00px;height:19.00px;background:#f1f1f1;border:1px solid #cdcdcd;border-radius:3.5px;box-sizing:border-box"></div>
<svg class="b" style="left:277.00px;top:248.00px;" width="7" height="12" viewBox="0 0 7 12"><path d="M0 0 L7 6 L0 12 Z" fill="#5c5c4e"/></svg>
<div class="t" style="left:294.00px;top:246.00px;height:16px;line-height:16px;font-size:11px;color:#505050;letter-spacing:0.382px;">3</div>
<div class="b" style="left:344.00px;top:251.00px;width:79.50px;height:6.00px;background:#f0f0f0;border-radius:3px"></div>
<div class="t" style="left:429.50px;top:246.00px;height:16px;line-height:16px;font-size:11px;color:#505050;letter-spacing:0.382px;">0</div>
<div class="t" style="left:494.50px;top:238.00px;height:16px;line-height:16px;font-size:11px;color:#505050;letter-spacing:0.628px;">Default NAT</div>
<div class="t" style="left:494.50px;top:254.00px;height:16px;line-height:16px;font-size:11px;color:#505050;letter-spacing:0.365px;">Policy_5</div>
<div class="b" style="left:628.00px;top:245.90px;width:28.00px;height:16.00px;background:#d3e794;border-radius:8px"></div>
<div class="b" style="left:641.90px;top:247.80px;width:12.20px;height:12.20px;background:#fff;border-radius:50%"></div>
<svg class="b" style="left:683.10px;top:248.10px;" width="14" height="12" viewBox="0 0 14 12"><rect x="0" y="0" width="13.8" height="11.6" rx="2.2" fill="#585858"/><path d="M4.5 2.6 H9.5 V4.2 H11.7 V8.7 H2 V4.2 H4.5 Z" fill="#f6f6f6"/><g><rect x="3.2" y="6.6" width="0.9" height="2.1" fill="#e0b070"/><rect x="4.9" y="6.6" width="0.9" height="2.1" fill="#8fb0e0"/><rect x="6.6" y="6.6" width="0.9" height="2.1" fill="#e0b070"/><rect x="8.3" y="6.6" width="0.9" height="2.1" fill="#8fb0e0"/><rect x="10" y="6.6" width="0.9" height="2.1" fill="#e0b070"/></g></svg>
<div class="t" style="left:702.00px;top:246.00px;height:16px;line-height:16px;font-size:11px;color:#505050;letter-spacing:0.273px;">X1</div>
<svg class="b" style="left:816.10px;top:248.10px;" width="14" height="12" viewBox="0 0 14 12"><rect x="0" y="0" width="13.8" height="11.6" rx="2.2" fill="#585858"/><path d="M4.5 2.6 H9.5 V4.2 H11.7 V8.7 H2 V4.2 H4.5 Z" fill="#f6f6f6"/><g><rect x="3.2" y="6.6" width="0.9" height="2.1" fill="#e0b070"/><rect x="4.9" y="6.6" width="0.9" height="2.1" fill="#8fb0e0"/><rect x="6.6" y="6.6" width="0.9" height="2.1" fill="#e0b070"/><rect x="8.3" y="6.6" width="0.9" height="2.1" fill="#8fb0e0"/><rect x="10" y="6.6" width="0.9" height="2.1" fill="#e0b070"/></g></svg>
<div class="t" style="left:835.00px;top:246.00px;height:16px;line-height:16px;font-size:11px;color:#505050;letter-spacing:0.273px;">X1</div>
<svg class="b" style="left:950.00px;top:247.00px;" width="15" height="14" viewBox="0 0 15 14"><circle cx="2.7" cy="7.2" r="2.3" fill="#0a0a0a"/><circle cx="10.1" cy="2.5" r="1.7" fill="#0a0a0a"/><circle cx="10.9" cy="9.3" r="3.5" fill="#0a0a0a"/></svg>
<div class="t" style="left:969.50px;top:246.00px;height:16px;line-height:16px;font-size:11px;color:#505050;letter-spacing:0.848px;">Any</div>
<svg class="b" style="left:1102.50px;top:246.90px;" width="10" height="14" viewBox="0 0 10 14"><path d="M5 0 C2 0 0 2.1 0 4.8 C0 7.6 2.8 10.4 5 13.9 C7.2 10.4 10 7.6 10 4.8 C10 2.1 8 0 5 0 Z M5 3.2 A1.7 1.7 0 1 1 5 6.6 A1.7 1.7 0 1 1 5 3.2 Z" fill="#cc88c4" fill-rule="evenodd"/></svg>
<div class="t" style="left:1119.50px;top:246.00px;height:16px;line-height:16px;font-size:11px;color:#505050;letter-spacing:0.419px;">X1 IP</div>
<svg class="b" style="left:1250.00px;top:246.00px;" width="16" height="16" viewBox="0 0 16 16"><path d="M14.79 6.23 L14.79 8.77 L12.92 8.89 L12.32 10.35 L13.55 11.76 L11.76 13.55 L10.35 12.32 L8.89 12.92 L8.77 14.79 L6.23 14.79 L6.11 12.92 L4.65 12.32 L3.24 13.55 L1.45 11.76 L2.68 10.35 L2.08 8.89 L0.21 8.77 L0.21 6.23 L2.08 6.11 L2.68 4.65 L1.45 3.24 L3.24 1.45 L4.65 2.68 L6.11 2.08 L6.23 0.21 L8.77 0.21 L8.89 2.08 L10.35 2.68 L11.76 1.45 L13.55 3.24 L12.32 4.65 L12.92 6.11Z M4.10 7.50 a3.40 3.40 0 1 0 6.80 0 a3.40 3.40 0 1 0 -6.80 0Z" fill="#3c9fe0" fill-rule="evenodd"/><circle cx="7.5" cy="7.5" r="3.6" fill="#fff"/><path d="M5 6.5 A2.4 2.4 0 0 1 9 5 L7.6 6.6 L8.6 7.6 L10.2 6.2 A2.4 2.4 0 0 1 7.6 9.2 Z" fill="#3c9fe0"/><path d="M8.5 8.5 L14 14" stroke="#3c9fe0" stroke-width="2.2" stroke-linecap="round"/></svg>
<div class="t" style="left:1269.50px;top:246.00px;height:16px;line-height:16px;font-size:11px;color:#505050;letter-spacing:0.580px;">SSH Management</div>
<svg class="b" style="left:1400.00px;top:247.00px;" width="15" height="14" viewBox="0 0 15 14"><circle cx="2.7" cy="7.2" r="2.3" fill="#0a0a0a"/><circle cx="10.1" cy="2.5" r="1.7" fill="#0a0a0a"/><circle cx="10.9" cy="9.3" r="3.5" fill="#0a0a0a"/></svg>
<div class="t" style="left:1419.50px;top:246.00px;height:16px;line-height:16px;font-size:11px;color:#505050;letter-spacing:0.574px;">Original</div>
<svg class="b" style="left:1551.00px;top:247.00px;" width="15" height="14" viewBox="0 0 15 14"><circle cx="2.7" cy="7.2" r="2.3" fill="#0a0a0a"/><circle cx="10.1" cy="2.5" r="1.7" fill="#0a0a0a"/><circle cx="10.9" cy="9.3" r="3.5" fill="#0a0a0a"/></svg>
<div class="t" style="left:1570.50px;top:246.00px;height:16px;line-height:16px;font-size:11px;color:#505050;letter-spacing:0.574px;">Original</div>
<svg class="b" style="left:1701.00px;top:247.00px;" width="15" height="14" viewBox="0 0 15 14"><circle cx="2.7" cy="7.2" r="2.3" fill="#0a0a0a"/><circle cx="10.1" cy="2.5" r="1.7" fill="#0a0a0a"/><circle cx="10.9" cy="9.3" r="3.5" fill="#0a0a0a"/></svg>
<div class="t" style="left:1720.50px;top:246.00px;height:16px;line-height:16px;font-size:11px;color:#505050;letter-spacing:0.574px;">Original</div>
<div class="b" style="left:1855.80px;top:246.90px;width:16.30px;height:2.80px;background:#5a5a5a"></div>
<div class="b" style="left:1855.80px;top:252.60px;width:16.30px;height:2.80px;background:#5a5a5a"></div>
<div class="b" style="left:1855.80px;top:258.30px;width:16.30px;height:2.80px;background:#5a5a5a"></div>
<div class="b" style="left:222.00px;top:271.00px;width:14.00px;height:32.00px;background:#99cc00"></div>
<div class="b" style="left:222.00px;top:303.00px;width:14.00px;height:1.00px;background:#d6eb99"></div>
<div class="b" style="left:236.00px;top:303.00px;width:1666.00px;height:1.00px;background:#e6e6e6"></div>
<div class="b" style="left:242.00px;top:278.00px;width:19.00px;height:19.00px;background:#f1f1f1;border:1px solid #cdcdcd;border-radius:3.5px;box-sizing:border-box"></div>
<svg class="b" style="left:277.00px;top:281.00px;" width="7" height="12" viewBox="0 0 7 12"><path d="M0 0 L7 6 L0 12 Z" fill="#5c5c4e"/></svg>
<div class="t" style="left:294.00px;top:279.00px;height:16px;line-height:16px;font-size:11px;color:#505050;letter-spacing:0.882px;">4</div>
<div class="b" style="left:344.00px;top:284.00px;width:79.50px;height:6.00px;background:#f0f0f0;border-radius:3px"></div>
<div class="t" style="left:429.50px;top:279.00px;height:16px;line-height:16px;font-size:11px;color:#505050;letter-spacing:0.382px;">0</div>
<div class="t" style="left:494.50px;top:271.00px;height:16px;line-height:16px;font-size:11px;color:#505050;letter-spacing:0.628px;">Default NAT</div>
<div class="t" style="left:494.50px;top:287.00px;height:16px;line-height:16px;font-size:11px;color:#505050;letter-spacing:0.365px;">Policy_6</div>
<div class="b" style="left:628.00px;top:278.90px;width:28.00px;height:16.00px;background:#d3e794;border-radius:8px"></div>
<div class="b" style="left:641.90px;top:280.80px;width:12.20px;height:12.20px;background:#fff;border-radius:50%"></div>
<svg class="b" style="left:683.10px;top:281.10px;" width="14" height="12" viewBox="0 0 14 12"><rect x="0" y="0" width="13.8" height="11.6" rx="2.2" fill="#585858"/><path d="M4.5 2.6 H9.5 V4.2 H11.7 V8.7 H2 V4.2 H4.5 Z" fill="#f6f6f6"/><g><rect x="3.2" y="6.6" width="0.9" height="2.1" fill="#e0b070"/><rect x="4.9" y="6.6" width="0.9" height="2.1" fill="#8fb0e0"/><rect x="6.6" y="6.6" width="0.9" height="2.1" fill="#e0b070"/><rect x="8.3" y="6.6" width="0.9" height="2.1" fill="#8fb0e0"/><rect x="10" y="6.6" width="0.9" height="2.1" fill="#e0b070"/></g></svg>
<div class="t" style="left:702.00px;top:279.00px;height:16px;line-height:16px;font-size:11px;color:#505050;letter-spacing:0.273px;">X1</div>
<svg class="b" style="left:816.10px;top:281.10px;" width="14" height="12" viewBox="0 0 14 12"><rect x="0" y="0" width="13.8" height="11.6" rx="2.2" fill="#585858"/><path d="M4.5 2.6 H9.5 V4.2 H11.7 V8.7 H2 V4.2 H4.5 Z" fill="#f6f6f6"/><g><rect x="3.2" y="6.6" width="0.9" height="2.1" fill="#e0b070"/><rect x="4.9" y="6.6" width="0.9" height="2.1" fill="#8fb0e0"/><rect x="6.6" y="6.6" width="0.9" height="2.1" fill="#e0b070"/><rect x="8.3" y="6.6" width="0.9" height="2.1" fill="#8fb0e0"/><rect x="10" y="6.6" width="0.9" height="2.1" fill="#e0b070"/></g></svg>
<div class="t" style="left:835.00px;top:279.00px;height:16px;line-height:16px;font-size:11px;color:#505050;letter-spacing:0.273px;">X1</div>
<svg class="b" style="left:950.00px;top:280.00px;" width="15" height="14" viewBox="0 0 15 14"><circle cx="2.7" cy="7.2" r="2.3" fill="#0a0a0a"/><circle cx="10.1" cy="2.5" r="1.7" fill="#0a0a0a"/><circle cx="10.9" cy="9.3" r="3.5" fill="#0a0a0a"/></svg>
<div class="t" style="left:969.50px;top:279.00px;height:16px;line-height:16px;font-size:11px;color:#505050;letter-spacing:0.848px;">Any</div>
<svg class="b" style="left:1102.50px;top:279.90px;" width="10" height="14" viewBox="0 0 10 14"><path d="M5 0 C2 0 0 2.1 0 4.8 C0 7.6 2.8 10.4 5 13.9 C7.2 10.4 10 7.6 10 4.8 C10 2.1 8 0 5 0 Z M5 3.2 A1.7 1.7 0 1 1 5 6.6 A1.7 1.7 0 1 1 5 3.2 Z" fill="#cc88c4" fill-rule="evenodd"/></svg>
<div class="t" style="left:1119.50px;top:279.00px;height:16px;line-height:16px;font-size:11px;color:#505050;letter-spacing:0.419px;">X1 IP</div>
<svg class="b" style="left:1250.00px;top:279.00px;" width="16" height="16" viewBox="0 0 16 16"><path d="M14.79 6.23 L14.79 8.77 L12.92 8.89 L12.32 10.35 L13.55 11.76 L11.76 13.55 L10.35 12.32 L8.89 12.92 L8.77 14.79 L6.23 14.79 L6.11 12.92 L4.65 12.32 L3.24 13.55 L1.45 11.76 L2.68 10.35 L2.08 8.89 L0.21 8.77 L0.21 6.23 L2.08 6.11 L2.68 4.65 L1.45 3.24 L3.24 1.45 L4.65 2.68 L6.11 2.08 L6.23 0.21 L8.77 0.21 L8.89 2.08 L10.35 2.68 L11.76 1.45 L13.55 3.24 L12.32 4.65 L12.92 6.11Z M4.10 7.50 a3.40 3.40 0 1 0 6.80 0 a3.40 3.40 0 1 0 -6.80 0Z" fill="#3c9fe0" fill-rule="evenodd"/><circle cx="7.5" cy="7.5" r="3.6" fill="#fff"/><path d="M5 6.5 A2.4 2.4 0 0 1 9 5 L7.6 6.6 L8.6 7.6 L10.2 6.2 A2.4 2.4 0 0 1 7.6 9.2 Z" fill="#3c9fe0"/><path d="M8.5 8.5 L14 14" stroke="#3c9fe0" stroke-width="2.2" stroke-linecap="round"/></svg>
<div class="t" style="left:1269.50px;top:271.00px;height:16px;line-height:16px;font-size:11px;color:#505050;letter-spacing:0.489px;">HTTPS</div>
<div class="t" style="left:1269.50px;top:287.00px;height:16px;line-height:16px;font-size:11px;color:#505050;letter-spacing:0.629px;">Management</div>
<svg class="b" style="left:1400.00px;top:280.00px;" width="15" height="14" viewBox="0 0 15 14"><circle cx="2.7" cy="7.2" r="2.3" fill="#0a0a0a"/><circle cx="10.1" cy="2.5" r="1.7" fill="#0a0a0a"/><circle cx="10.9" cy="9.3" r="3.5" fill="#0a0a0a"/></svg>
<div class="t" style="left:1419.50px;top:279.00px;height:16px;line-height:16px;font-size:11px;color:#505050;letter-spacing:0.574px;">Original</div>
<svg class="b" style="left:1551.00px;top:280.00px;" width="15" height="14" viewBox="0 0 15 14"><circle cx="2.7" cy="7.2" r="2.3" fill="#0a0a0a"/><circle cx="10.1" cy="2.5" r="1.7" fill="#0a0a0a"/><circle cx="10.9" cy="9.3" r="3.5" fill="#0a0a0a"/></svg>
<div class="t" style="left:1570.50px;top:279.00px;height:16px;line-height:16px;font-size:11px;color:#505050;letter-spacing:0.574px;">Original</div>
<svg class="b" style="left:1701.00px;top:280.00px;" width="15" height="14" viewBox="0 0 15 14"><circle cx="2.7" cy="7.2" r="2.3" fill="#0a0a0a"/><circle cx="10.1" cy="2.5" r="1.7" fill="#0a0a0a"/><circle cx="10.9" cy="9.3" r="3.5" fill="#0a0a0a"/></svg>
<div class="t" style="left:1720.50px;top:279.00px;height:16px;line-height:16px;font-size:11px;color:#505050;letter-spacing:0.574px;">Original</div>
<div class="b" style="left:1855.80px;top:279.90px;width:16.30px;height:2.80px;background:#5a5a5a"></div>
<div class="b" style="left:1855.80px;top:285.60px;width:16.30px;height:2.80px;background:#5a5a5a"></div>
<div class="b" style="left:1855.80px;top:291.30px;width:16.30px;height:2.80px;background:#5a5a5a"></div>
<div class="b" style="left:222.00px;top:304.00px;width:14.00px;height:32.00px;background:#99cc00"></div>
<div class="b" style="left:222.00px;top:336.00px;width:14.00px;height:1.00px;background:#d6eb99"></div>
<div class="b" style="left:236.00px;top:336.00px;width:1666.00px;height:1.00px;background:#e6e6e6"></div>
<div class="b" style="left:242.00px;top:311.00px;width:19.00px;height:19.00px;background:#f1f1f1;border:1px solid #cdcdcd;border-radius:3.5px;box-sizing:border-box"></div>
<svg class="b" style="left:277.00px;top:314.00px;" width="7" height="12" viewBox="0 0 7 12"><path d="M0 0 L7 6 L0 12 Z" fill="#5c5c4e"/></svg>
<div class="t" style="left:294.00px;top:312.00px;height:16px;line-height:16px;font-size:11px;color:#505050;letter-spacing:0.382px;">5</div>
<div class="b" style="left:344.00px;top:317.00px;width:79.50px;height:6.00px;background:#f0f0f0;border-radius:3px"></div>
<div class="t" style="left:429.50px;top:312.00px;height:16px;line-height:16px;font-size:11px;color:#505050;letter-spacing:0.382px;">0</div>
<div class="t" style="left:494.50px;top:304.00px;height:16px;line-height:16px;font-size:11px;color:#505050;letter-spacing:0.628px;">Default NAT</div>
<div class="t" style="left:494.50px;top:320.00px;height:16px;line-height:16px;font-size:11px;color:#505050;letter-spacing:0.365px;">Policy_7</div>
<div class="b" style="left:628.00px;top:311.90px;width:28.00px;height:16.00px;background:#d3e794;border-radius:8px"></div>
<div class="b" style="left:641.90px;top:313.80px;width:12.20px;height:12.20px;background:#fff;border-radius:50%"></div>
<svg class="b" style="left:683.10px;top:314.10px;" width="14" height="12" viewBox="0 0 14 12"><rect x="0" y="0" width="13.8" height="11.6" rx="2.2" fill="#585858"/><path d="M4.5 2.6 H9.5 V4.2 H11.7 V8.7 H2 V4.2 H4.5 Z" fill="#f6f6f6"/><g><rect x="3.2" y="6.6" width="0.9" height="2.1" fill="#e0b070"/><rect x="4.9" y="6.6" width="0.9" height="2.1" fill="#8fb0e0"/><rect x="6.6" y="6.6" width="0.9" height="2.1" fill="#e0b070"/><rect x="8.3" y="6.6" width="0.9" height="2.1" fill="#8fb0e0"/><rect x="10" y="6.6" width="0.9" height="2.1" fill="#e0b070"/></g></svg>
<div class="t" style="left:702.00px;top:312.00px;height:16px;line-height:16px;font-size:11px;color:#505050;letter-spacing:0.273px;">X1</div>
<svg class="b" style="left:816.10px;top:314.10px;" width="14" height="12" viewBox="0 0 14 12"><rect x="0" y="0" width="13.8" height="11.6" rx="2.2" fill="#585858"/><path d="M4.5 2.6 H9.5 V4.2 H11.7 V8.7 H2 V4.2 H4.5 Z" fill="#f6f6f6"/><g><rect x="3.2" y="6.6" width="0.9" height="2.1" fill="#e0b070"/><rect x="4.9" y="6.6" width="0.9" height="2.1" fill="#8fb0e0"/><rect x="6.6" y="6.6" width="0.9" height="2.1" fill="#e0b070"/><rect x="8.3" y="6.6" width="0.9" height="2.1" fill="#8fb0e0"/><rect x="10" y="6.6" width="0.9" height="2.1" fill="#e0b070"/></g></svg>
<div class="t" style="left:835.00px;top:312.00px;height:16px;line-height:16px;font-size:11px;color:#505050;letter-spacing:0.273px;">X1</div>
<svg class="b" style="left:950.00px;top:313.00px;" width="15" height="14" viewBox="0 0 15 14"><circle cx="2.7" cy="7.2" r="2.3" fill="#0a0a0a"/><circle cx="10.1" cy="2.5" r="1.7" fill="#0a0a0a"/><circle cx="10.9" cy="9.3" r="3.5" fill="#0a0a0a"/></svg>
<div class="t" style="left:969.50px;top:312.00px;height:16px;line-height:16px;font-size:11px;color:#505050;letter-spacing:0.848px;">Any</div>
<svg class="b" style="left:1102.50px;top:312.90px;" width="10" height="14" viewBox="0 0 10 14"><path d="M5 0 C2 0 0 2.1 0 4.8 C0 7.6 2.8 10.4 5 13.9 C7.2 10.4 10 7.6 10 4.8 C10 2.1 8 0 5 0 Z M5 3.2 A1.7 1.7 0 1 1 5 6.6 A1.7 1.7 0 1 1 5 3.2 Z" fill="#cc88c4" fill-rule="evenodd"/></svg>
<div class="t" style="left:1119.50px;top:312.00px;height:16px;line-height:16px;font-size:11px;color:#505050;letter-spacing:0.419px;">X1 IP</div>
<svg class="b" style="left:1250.00px;top:312.00px;" width="16" height="16" viewBox="0 0 16 16"><path d="M14.79 6.23 L14.79 8.77 L12.92 8.89 L12.32 10.35 L13.55 11.76 L11.76 13.55 L10.35 12.32 L8.89 12.92 L8.77 14.79 L6.23 14.79 L6.11 12.92 L4.65 12.32 L3.24 13.55 L1.45 11.76 L2.68 10.35 L2.08 8.89 L0.21 8.77 L0.21 6.23 L2.08 6.11 L2.68 4.65 L1.45 3.24 L3.24 1.45 L4.65 2.68 L6.11 2.08 L6.23 0.21 L8.77 0.21 L8.89 2.08 L10.35 2.68 L11.76 1.45 L13.55 3.24 L12.32 4.65 L12.92 6.11Z M4.10 7.50 a3.40 3.40 0 1 0 6.80 0 a3.40 3.40 0 1 0 -6.80 0Z" fill="#3c9fe0" fill-rule="evenodd"/><circle cx="7.5" cy="7.5" r="3.6" fill="#fff"/><path d="M5 6.5 A2.4 2.4 0 0 1 9 5 L7.6 6.6 L8.6 7.6 L10.2 6.2 A2.4 2.4 0 0 1 7.6 9.2 Z" fill="#3c9fe0"/><path d="M8.5 8.5 L14 14" stroke="#3c9fe0" stroke-width="2.2" stroke-linecap="round"/></svg>
<div class="t" style="left:1269.50px;top:312.00px;height:16px;line-height:16px;font-size:11px;color:#505050;letter-spacing:0.648px;">HTTP Management</div>
<svg class="b" style="left:1400.00px;top:313.00px;" width="15" height="14" viewBox="0 0 15 14"><circle cx="2.7" cy="7.2" r="2.3" fill="#0a0a0a"/><circle cx="10.1" cy="2.5" r="1.7" fill="#0a0a0a"/><circle cx="10.9" cy="9.3" r="3.5" fill="#0a0a0a"/></svg>
<div class="t" style="left:1419.50px;top:312.00px;height:16px;line-height:16px;font-size:11px;color:#505050;letter-spacing:0.574px;">Original</div>
<svg class="b" style="left:1551.00px;top:313.00px;" width="15" height="14" viewBox="0 0 15 14"><circle cx="2.7" cy="7.2" r="2.3" fill="#0a0a0a"/><circle cx="10.1" cy="2.5" r="1.7" fill="#0a0a0a"/><circle cx="10.9" cy="9.3" r="3.5" fill="#0a0a0a"/></svg>
<div class="t" style="left:1570.50px;top:312.00px;height:16px;line-height:16px;font-size:11px;color:#505050;letter-spacing:0.574px;">Original</div>
<svg class="b" style="left:1701.00px;top:313.00px;" width="15" height="14" viewBox="0 0 15 14"><circle cx="2.7" cy="7.2" r="2.3" fill="#0a0a0a"/><circle cx="10.1" cy="2.5" r="1.7" fill="#0a0a0a"/><circle cx="10.9" cy="9.3" r="3.5" fill="#0a0a0a"/></svg>
<div class="t" style="left:1720.50px;top:312.00px;height:16px;line-height:16px;font-size:11px;color:#505050;letter-spacing:0.574px;">Original</div>
<div class="b" style="left:1855.80px;top:312.90px;width:16.30px;height:2.80px;background:#5a5a5a"></div>
<div class="b" style="left:1855.80px;top:318.60px;width:16.30px;height:2.80px;background:#5a5a5a"></div>
<div class="b" style="left:1855.80px;top:324.30px;width:16.30px;height:2.80px;background:#5a5a5a"></div>
<div class="b" style="left:222.00px;top:337.00px;width:14.00px;height:32.00px;background:#99cc00"></div>
<div class="b" style="left:222.00px;top:369.00px;width:14.00px;height:1.00px;background:#d6eb99"></div>
<div class="b" style="left:236.00px;top:369.00px;width:1666.00px;height:1.00px;background:#e6e6e6"></div>
<div class="b" style="left:242.00px;top:344.00px;width:19.00px;height:19.00px;background:#f1f1f1;border:1px solid #cdcdcd;border-radius:3.5px;box-sizing:border-box"></div>
<svg class="b" style="left:277.00px;top:347.00px;" width="7" height="12" viewBox="0 0 7 12"><path d="M0 0 L7 6 L0 12 Z" fill="#5c5c4e"/></svg>
<div class="t" style="left:294.00px;top:345.00px;height:16px;line-height:16px;font-size:11px;color:#505050;letter-spacing:0.382px;">6</div>
<div class="b" style="left:344.00px;top:350.00px;width:79.50px;height:6.00px;background:#f0f0f0;border-radius:3px"></div>
<div class="t" style="left:429.50px;top:345.00px;height:16px;line-height:16px;font-size:11px;color:#505050;letter-spacing:0.382px;">0</div>
<div class="t" style="left:494.50px;top:337.00px;height:16px;line-height:16px;font-size:11px;color:#505050;letter-spacing:0.628px;">Default NAT</div>
<div class="t" style="left:494.50px;top:353.00px;height:16px;line-height:16px;font-size:11px;color:#505050;letter-spacing:0.365px;">Policy_8</div>
<div class="b" style="left:628.00px;top:344.90px;width:28.00px;height:16.00px;background:#d3e794;border-radius:8px"></div>
<div class="b" style="left:641.90px;top:346.80px;width:12.20px;height:12.20px;background:#fff;border-radius:50%"></div>
<svg class="b" style="left:683.10px;top:347.10px;" width="14" height="12" viewBox="0 0 14 12"><rect x="0" y="0" width="13.8" height="11.6" rx="2.2" fill="#585858"/><path d="M4.5 2.6 H9.5 V4.2 H11.7 V8.7 H2 V4.2 H4.5 Z" fill="#f6f6f6"/><g><rect x="3.2" y="6.6" width="0.9" height="2.1" fill="#e0b070"/><rect x="4.9" y="6.6" width="0.9" height="2.1" fill="#8fb0e0"/><rect x="6.6" y="6.6" width="0.9" height="2.1" fill="#e0b070"/><rect x="8.3" y="6.6" width="0.9" height="2.1" fill="#8fb0e0"/><rect x="10" y="6.6" width="0.9" height="2.1" fill="#e0b070"/></g></svg>
<div class="t" style="left:702.00px;top:345.00px;height:16px;line-height:16px;font-size:11px;color:#505050;letter-spacing:0.273px;">X0</div>
<svg class="b" style="left:816.10px;top:347.10px;" width="14" height="12" viewBox="0 0 14 12"><rect x="0" y="0" width="13.8" height="11.6" rx="2.2" fill="#585858"/><path d="M4.5 2.6 H9.5 V4.2 H11.7 V8.7 H2 V4.2 H4.5 Z" fill="#f6f6f6"/><g><rect x="3.2" y="6.6" width="0.9" height="2.1" fill="#e0b070"/><rect x="4.9" y="6.6" width="0.9" height="2.1" fill="#8fb0e0"/><rect x="6.6" y="6.6" width="0.9" height="2.1" fill="#e0b070"/><rect x="8.3" y="6.6" width="0.9" height="2.1" fill="#8fb0e0"/><rect x="10" y="6.6" width="0.9" height="2.1" fill="#e0b070"/></g></svg>
<div class="t" style="left:835.00px;top:345.00px;height:16px;line-height:16px;font-size:11px;color:#505050;letter-spacing:0.273px;">X0</div>
<svg class="b" style="left:950.00px;top:346.00px;" width="15" height="14" viewBox="0 0 15 14"><circle cx="2.7" cy="7.2" r="2.3" fill="#0a0a0a"/><circle cx="10.1" cy="2.5" r="1.7" fill="#0a0a0a"/><circle cx="10.9" cy="9.3" r="3.5" fill="#0a0a0a"/></svg>
<div class="t" style="left:969.50px;top:345.00px;height:16px;line-height:16px;font-size:11px;color:#505050;letter-spacing:0.848px;">Any</div>
<svg class="b" style="left:1102.50px;top:345.90px;" width="10" height="14" viewBox="0 0 10 14"><path d="M5 0 C2 0 0 2.1 0 4.8 C0 7.6 2.8 10.4 5 13.9 C7.2 10.4 10 7.6 10 4.8 C10 2.1 8 0 5 0 Z M5 3.2 A1.7 1.7 0 1 1 5 6.6 A1.7 1.7 0 1 1 5 3.2 Z" fill="#cc88c4" fill-rule="evenodd"/></svg>
<div class="t" style="left:1119.50px;top:345.00px;height:16px;line-height:16px;font-size:11px;color:#505050;letter-spacing:0.419px;">X0 IP</div>
<svg class="b" style="left:1250.00px;top:345.00px;" width="16" height="16" viewBox="0 0 16 16"><rect x="0.6" y="0.6" width="14.8" height="14.8" fill="none" stroke="#3c9fe0" stroke-width="1" stroke-dasharray="2 1.6"/><path d="M10.33 9.01 L10.33 10.59 L9.09 10.65 L8.73 11.53 L9.56 12.45 L8.45 13.56 L7.53 12.73 L6.65 13.09 L6.59 14.33 L5.01 14.33 L4.95 13.09 L4.07 12.73 L3.15 13.56 L2.04 12.45 L2.87 11.53 L2.51 10.65 L1.27 10.59 L1.27 9.01 L2.51 8.95 L2.87 8.07 L2.04 7.15 L3.15 6.04 L4.07 6.87 L4.95 6.51 L5.01 5.27 L6.59 5.27 L6.65 6.51 L7.53 6.87 L8.45 6.04 L9.56 7.15 L8.73 8.07 L9.09 8.95Z M4.20 9.80 a1.60 1.60 0 1 0 3.20 0 a1.60 1.60 0 1 0 -3.20 0Z" fill="#58aee6" fill-rule="evenodd"/><path d="M14.15 4.05 L14.15 5.15 L13.23 5.17 L12.98 5.77 L13.62 6.44 L12.84 7.22 L12.17 6.58 L11.57 6.83 L11.55 7.75 L10.45 7.75 L10.43 6.83 L9.83 6.58 L9.16 7.22 L8.38 6.44 L9.02 5.77 L8.77 5.17 L7.85 5.15 L7.85 4.05 L8.77 4.03 L9.02 3.43 L8.38 2.76 L9.16 1.98 L9.83 2.62 L10.43 2.37 L10.45 1.45 L11.55 1.45 L11.57 2.37 L12.17 2.62 L12.84 1.98 L13.62 2.76 L12.98 3.43 L13.23 4.03Z M9.90 4.60 a1.10 1.10 0 1 0 2.20 0 a1.10 1.10 0 1 0 -2.20 0Z" fill="#7dc0ec" fill-rule="evenodd"/><path d="M7 11 L10.5 14" stroke="#58aee6" stroke-width="1.6"/></svg>
<div class="t" style="left:1269.50px;top:345.00px;height:16px;line-height:16px;font-size:11px;color:#505050;letter-spacing:0.621px;">Ping</div>
<svg class="b" style="left:1400.00px;top:346.00px;" width="15" height="14" viewBox="0 0 15 14"><circle cx="2.7" cy="7.2" r="2.3" fill="#0a0a0a"/><circle cx="10.1" cy="2.5" r="1.7" fill="#0a0a0a"/><circle cx="10.9" cy="9.3" r="3.5" fill="#0a0a0a"/></svg>
<div class="t" style="left:1419.50px;top:345.00px;height:16px;line-height:16px;font-size:11px;color:#505050;letter-spacing:0.574px;">Original</div>
<svg class="b" style="left:1551.00px;top:346.00px;" width="15" height="14" viewBox="0 0 15 14"><circle cx="2.7" cy="7.2" r="2.3" fill="#0a0a0a"/><circle cx="10.1" cy="2.5" r="1.7" fill="#0a0a0a"/><circle cx="10.9" cy="9.3" r="3.5" fill="#0a0a0a"/></svg>
<div class="t" style="left:1570.50px;top:345.00px;height:16px;line-height:16px;font-size:11px;color:#505050;letter-spacing:0.574px;">Original</div>
<svg class="b" style="left:1701.00px;top:346.00px;" width="15" height="14" viewBox="0 0 15 14"><circle cx="2.7" cy="7.2" r="2.3" fill="#0a0a0a"/><circle cx="10.1" cy="2.5" r="1.7" fill="#0a0a0a"/><circle cx="10.9" cy="9.3" r="3.5" fill="#0a0a0a"/></svg>
<div class="t" style="left:1720.50px;top:345.00px;height:16px;line-height:16px;font-size:11px;color:#505050;letter-spacing:0.574px;">Original</div>
<div class="b" style="left:1855.80px;top:345.90px;width:16.30px;height:2.80px;background:#5a5a5a"></div>
<div class="b" style="left:1855.80px;top:351.60px;width:16.30px;height:2.80px;background:#5a5a5a"></div>
<div class="b" style="left:1855.80px;top:357.30px;width:16.30px;height:2.80px;background:#5a5a5a"></div>
<div class="b" style="left:222.00px;top:370.00px;width:14.00px;height:32.00px;background:#99cc00"></div>
<div class="b" style="left:222.00px;top:402.00px;width:14.00px;height:1.00px;background:#d6eb99"></div>
<div class="b" style="left:236.00px;top:402.00px;width:1666.00px;height:1.00px;background:#e6e6e6"></div>
<div class="b" style="left:242.00px;top:377.00px;width:19.00px;height:19.00px;background:#f1f1f1;border:1px solid #cdcdcd;border-radius:3.5px;box-sizing:border-box"></div>
<svg class="b" style="left:277.00px;top:380.00px;" width="7" height="12" viewBox="0 0 7 12"><path d="M0 0 L7 6 L0 12 Z" fill="#5c5c4e"/></svg>
<div class="t" style="left:294.00px;top:378.00px;height:16px;line-height:16px;font-size:11px;color:#505050;letter-spacing:-0.118px;">7</div>
<div class="b" style="left:344.00px;top:383.00px;width:79.50px;height:6.00px;background:#f0f0f0;border-radius:3px"></div>
<div class="b" style="left:344.00px;top:383.00px;width:78.50px;height:6.00px;background:#ff7a14;border-radius:3px 1px 1px 3px"></div>
<div class="t" style="left:429.50px;top:378.00px;height:16px;line-height:16px;font-size:11px;color:#505050;letter-spacing:0.718px;">37.2k</div>
<div class="t" style="left:494.50px;top:370.00px;height:16px;line-height:16px;font-size:11px;color:#505050;letter-spacing:0.628px;">Default NAT</div>
<div class="t" style="left:494.50px;top:386.00px;height:16px;line-height:16px;font-size:11px;color:#505050;letter-spacing:0.365px;">Policy_9</div>
<div class="b" style="left:628.00px;top:377.90px;width:28.00px;height:16.00px;background:#d3e794;border-radius:8px"></div>
<div class="b" style="left:641.90px;top:379.80px;width:12.20px;height:12.20px;background:#fff;border-radius:50%"></div>
<svg class="b" style="left:683.10px;top:380.10px;" width="14" height="12" viewBox="0 0 14 12"><rect x="0" y="0" width="13.8" height="11.6" rx="2.2" fill="#585858"/><path d="M4.5 2.6 H9.5 V4.2 H11.7 V8.7 H2 V4.2 H4.5 Z" fill="#f6f6f6"/><g><rect x="3.2" y="6.6" width="0.9" height="2.1" fill="#e0b070"/><rect x="4.9" y="6.6" width="0.9" height="2.1" fill="#8fb0e0"/><rect x="6.6" y="6.6" width="0.9" height="2.1" fill="#e0b070"/><rect x="8.3" y="6.6" width="0.9" height="2.1" fill="#8fb0e0"/><rect x="10" y="6.6" width="0.9" height="2.1" fill="#e0b070"/></g></svg>
<div class="t" style="left:702.00px;top:378.00px;height:16px;line-height:16px;font-size:11px;color:#505050;letter-spacing:0.273px;">X0</div>
<svg class="b" style="left:816.10px;top:380.10px;" width="14" height="12" viewBox="0 0 14 12"><rect x="0" y="0" width="13.8" height="11.6" rx="2.2" fill="#585858"/><path d="M4.5 2.6 H9.5 V4.2 H11.7 V8.7 H2 V4.2 H4.5 Z" fill="#f6f6f6"/><g><rect x="3.2" y="6.6" width="0.9" height="2.1" fill="#e0b070"/><rect x="4.9" y="6.6" width="0.9" height="2.1" fill="#8fb0e0"/><rect x="6.6" y="6.6" width="0.9" height="2.1" fill="#e0b070"/><rect x="8.3" y="6.6" width="0.9" height="2.1" fill="#8fb0e0"/><rect x="10" y="6.6" width="0.9" height="2.1" fill="#e0b070"/></g></svg>
<div class="t" style="left:835.00px;top:378.00px;height:16px;line-height:16px;font-size:11px;color:#505050;letter-spacing:0.273px;">X0</div>
<svg class="b" style="left:950.00px;top:379.00px;" width="15" height="14" viewBox="0 0 15 14"><circle cx="2.7" cy="7.2" r="2.3" fill="#0a0a0a"/><circle cx="10.1" cy="2.5" r="1.7" fill="#0a0a0a"/><circle cx="10.9" cy="9.3" r="3.5" fill="#0a0a0a"/></svg>
<div class="t" style="left:969.50px;top:378.00px;height:16px;line-height:16px;font-size:11px;color:#505050;letter-spacing:0.848px;">Any</div>
<svg class="b" style="left:1102.50px;top:378.90px;" width="10" height="14" viewBox="0 0 10 14"><path d="M5 0 C2 0 0 2.1 0 4.8 C0 7.6 2.8 10.4 5 13.9 C7.2 10.4 10 7.6 10 4.8 C10 2.1 8 0 5 0 Z M5 3.2 A1.7 1.7 0 1 1 5 6.6 A1.7 1.7 0 1 1 5 3.2 Z" fill="#cc88c4" fill-rule="evenodd"/></svg>
<div class="t" style="left:1119.50px;top:378.00px;height:16px;line-height:16px;font-size:11px;color:#505050;letter-spacing:0.419px;">X0 IP</div>
<svg class="b" style="left:1250.00px;top:378.00px;" width="16" height="16" viewBox="0 0 16 16"><path d="M14.79 6.23 L14.79 8.77 L12.92 8.89 L12.32 10.35 L13.55 11.76 L11.76 13.55 L10.35 12.32 L8.89 12.92 L8.77 14.79 L6.23 14.79 L6.11 12.92 L4.65 12.32 L3.24 13.55 L1.45 11.76 L2.68 10.35 L2.08 8.89 L0.21 8.77 L0.21 6.23 L2.08 6.11 L2.68 4.65 L1.45 3.24 L3.24 1.45 L4.65 2.68 L6.11 2.08 L6.23 0.21 L8.77 0.21 L8.89 2.08 L10.35 2.68 L11.76 1.45 L13.55 3.24 L12.32 4.65 L12.92 6.11Z M4.10 7.50 a3.40 3.40 0 1 0 6.80 0 a3.40 3.40 0 1 0 -6.80 0Z" fill="#3c9fe0" fill-rule="evenodd"/><circle cx="7.5" cy="7.5" r="3.6" fill="#fff"/><path d="M5 6.5 A2.4 2.4 0 0 1 9 5 L7.6 6.6 L8.6 7.6 L10.2 6.2 A2.4 2.4 0 0 1 7.6 9.2 Z" fill="#3c9fe0"/><path d="M8.5 8.5 L14 14" stroke="#3c9fe0" stroke-width="2.2" stroke-linecap="round"/></svg>
<div class="t" style="left:1269.50px;top:370.00px;height:16px;line-height:16px;font-size:11px;color:#505050;letter-spacing:0.489px;">HTTPS</div>
<div class="t" style="left:1269.50px;top:386.00px;height:16px;line-height:16px;font-size:11px;color:#505050;letter-spacing:0.629px;">Management</div>
<svg class="b" style="left:1400.00px;top:379.00px;" width="15" height="14" viewBox="0 0 15 14"><circle cx="2.7" cy="7.2" r="2.3" fill="#0a0a0a"/><circle cx="10.1" cy="2.5" r="1.7" fill="#0a0a0a"/><circle cx="10.9" cy="9.3" r="3.5" fill="#0a0a0a"/></svg>
<div class="t" style="left:1419.50px;top:378.00px;height:16px;line-height:16px;font-size:11px;color:#505050;letter-spacing:0.574px;">Original</div>
<svg class="b" style="left:1551.00px;top:379.00px;" width="15" height="14" viewBox="0 0 15 14"><circle cx="2.7" cy="7.2" r="2.3" fill="#0a0a0a"/><circle cx="10.1" cy="2.5" r="1.7" fill="#0a0a0a"/><circle cx="10.9" cy="9.3" r="3.5" fill="#0a0a0a"/></svg>
<div class="t" style="left:1570.50px;top:378.00px;height:16px;line-height:16px;font-size:11px;color:#505050;letter-spacing:0.574px;">Original</div>
<svg class="b" style="left:1701.00px;top:379.00px;" width="15" height="14" viewBox="0 0 15 14"><circle cx="2.7" cy="7.2" r="2.3" fill="#0a0a0a"/><circle cx="10.1" cy="2.5" r="1.7" fill="#0a0a0a"/><circle cx="10.9" cy="9.3" r="3.5" fill="#0a0a0a"/></svg>
<div class="t" style="left:1720.50px;top:378.00px;height:16px;line-height:16px;font-size:11px;color:#505050;letter-spacing:0.574px;">Original</div>
<div class="b" style="left:1855.80px;top:378.90px;width:16.30px;height:2.80px;background:#5a5a5a"></div>
<div class="b" style="left:1855.80px;top:384.60px;width:16.30px;height:2.80px;background:#5a5a5a"></div>
<div class="b" style="left:1855.80px;top:390.30px;width:16.30px;height:2.80px;background:#5a5a5a"></div>
<div class="b" style="left:222.00px;top:403.00px;width:14.00px;height:32.00px;background:#99cc00"></div>
<div class="b" style="left:222.00px;top:435.00px;width:14.00px;height:1.00px;background:#d6eb99"></div>
<div class="b" style="left:236.00px;top:435.00px;width:1666.00px;height:1.00px;background:#e6e6e6"></div>
<div class="b" style="left:242.00px;top:410.00px;width:19.00px;height:19.00px;background:#f1f1f1;border:1px solid #cdcdcd;border-radius:3.5px;box-sizing:border-box"></div>
<svg class="b" style="left:277.00px;top:413.00px;" width="7" height="12" viewBox="0 0 7 12"><path d="M0 0 L7 6 L0 12 Z" fill="#5c5c4e"/></svg>
<div class="t" style="left:294.00px;top:411.00px;height:16px;line-height:16px;font-size:11px;color:#505050;letter-spacing:0.382px;">8</div>
<div class="b" style="left:344.00px;top:416.00px;width:79.50px;height:6.00px;background:#f0f0f0;border-radius:3px"></div>
<div class="t" style="left:429.50px;top:411.00px;height:16px;line-height:16px;font-size:11px;color:#505050;letter-spacing:0.382px;">0</div>
<div class="t" style="left:494.50px;top:403.00px;height:16px;line-height:16px;font-size:11px;color:#505050;letter-spacing:0.628px;">Default NAT</div>
<div class="t" style="left:494.50px;top:419.00px;height:16px;line-height:16px;font-size:11px;color:#505050;letter-spacing:0.367px;">Policy_10</div>
<div class="b" style="left:628.00px;top:410.90px;width:28.00px;height:16.00px;background:#d3e794;border-radius:8px"></div>
<div class="b" style="left:641.90px;top:412.80px;width:12.20px;height:12.20px;background:#fff;border-radius:50%"></div>
<svg class="b" style="left:683.10px;top:413.10px;" width="14" height="12" viewBox="0 0 14 12"><rect x="0" y="0" width="13.8" height="11.6" rx="2.2" fill="#585858"/><path d="M4.5 2.6 H9.5 V4.2 H11.7 V8.7 H2 V4.2 H4.5 Z" fill="#f6f6f6"/><g><rect x="3.2" y="6.6" width="0.9" height="2.1" fill="#e0b070"/><rect x="4.9" y="6.6" width="0.9" height="2.1" fill="#8fb0e0"/><rect x="6.6" y="6.6" width="0.9" height="2.1" fill="#e0b070"/><rect x="8.3" y="6.6" width="0.9" height="2.1" fill="#8fb0e0"/><rect x="10" y="6.6" width="0.9" height="2.1" fill="#e0b070"/></g></svg>
<div class="t" style="left:702.00px;top:411.00px;height:16px;line-height:16px;font-size:11px;color:#505050;letter-spacing:0.273px;">X0</div>
<svg class="b" style="left:816.10px;top:413.10px;" width="14" height="12" viewBox="0 0 14 12"><rect x="0" y="0" width="13.8" height="11.6" rx="2.2" fill="#585858"/><path d="M4.5 2.6 H9.5 V4.2 H11.7 V8.7 H2 V4.2 H4.5 Z" fill="#f6f6f6"/><g><rect x="3.2" y="6.6" width="0.9" height="2.1" fill="#e0b070"/><rect x="4.9" y="6.6" width="0.9" height="2.1" fill="#8fb0e0"/><rect x="6.6" y="6.6" width="0.9" height="2.1" fill="#e0b070"/><rect x="8.3" y="6.6" width="0.9" height="2.1" fill="#8fb0e0"/><rect x="10" y="6.6" width="0.9" height="2.1" fill="#e0b070"/></g></svg>
<div class="t" style="left:835.00px;top:411.00px;height:16px;line-height:16px;font-size:11px;color:#505050;letter-spacing:0.273px;">X0</div>
<svg class="b" style="left:950.00px;top:412.00px;" width="15" height="14" viewBox="0 0 15 14"><circle cx="2.7" cy="7.2" r="2.3" fill="#0a0a0a"/><circle cx="10.1" cy="2.5" r="1.7" fill="#0a0a0a"/><circle cx="10.9" cy="9.3" r="3.5" fill="#0a0a0a"/></svg>
<div class="t" style="left:969.50px;top:411.00px;height:16px;line-height:16px;font-size:11px;color:#505050;letter-spacing:0.848px;">Any</div>
<svg class="b" style="left:1102.50px;top:411.90px;" width="10" height="14" viewBox="0 0 10 14"><path d="M5 0 C2 0 0 2.1 0 4.8 C0 7.6 2.8 10.4 5 13.9 C7.2 10.4 10 7.6 10 4.8 C10 2.1 8 0 5 0 Z M5 3.2 A1.7 1.7 0 1 1 5 6.6 A1.7 1.7 0 1 1 5 3.2 Z" fill="#cc88c4" fill-rule="evenodd"/></svg>
<div class="t" style="left:1119.50px;top:411.00px;height:16px;line-height:16px;font-size:11px;color:#505050;letter-spacing:0.419px;">X0 IP</div>
<svg class="b" style="left:1250.00px;top:411.00px;" width="16" height="16" viewBox="0 0 16 16"><path d="M14.79 6.23 L14.79 8.77 L12.92 8.89 L12.32 10.35 L13.55 11.76 L11.76 13.55 L10.35 12.32 L8.89 12.92 L8.77 14.79 L6.23 14.79 L6.11 12.92 L4.65 12.32 L3.24 13.55 L1.45 11.76 L2.68 10.35 L2.08 8.89 L0.21 8.77 L0.21 6.23 L2.08 6.11 L2.68 4.65 L1.45 3.24 L3.24 1.45 L4.65 2.68 L6.11 2.08 L6.23 0.21 L8.77 0.21 L8.89 2.08 L10.35 2.68 L11.76 1.45 L13.55 3.24 L12.32 4.65 L12.92 6.11Z M4.10 7.50 a3.40 3.40 0 1 0 6.80 0 a3.40 3.40 0 1 0 -6.80 0Z" fill="#3c9fe0" fill-rule="evenodd"/><circle cx="7.5" cy="7.5" r="3.6" fill="#fff"/><path d="M5 6.5 A2.4 2.4 0 0 1 9 5 L7.6 6.6 L8.6 7.6 L10.2 6.2 A2.4 2.4 0 0 1 7.6 9.2 Z" fill="#3c9fe0"/><path d="M8.5 8.5 L14 14" stroke="#3c9fe0" stroke-width="2.2" stroke-linecap="round"/></svg>
<div class="t" style="left:1269.50px;top:411.00px;height:16px;line-height:16px;font-size:11px;color:#505050;letter-spacing:0.648px;">HTTP Management</div>
<svg class="b" style="left:1400.00px;top:412.00px;" width="15" height="14" viewBox="0 0 15 14"><circle cx="2.7" cy="7.2" r="2.3" fill="#0a0a0a"/><circle cx="10.1" cy="2.5" r="1.7" fill="#0a0a0a"/><circle cx="10.9" cy="9.3" r="3.5" fill="#0a0a0a"/></svg>
<div class="t" style="left:1419.50px;top:411.00px;height:16px;line-height:16px;font-size:11px;color:#505050;letter-spacing:0.574px;">Original</div>
<svg class="b" style="left:1551.00px;top:412.00px;" width="15" height="14" viewBox="0 0 15 14"><circle cx="2.7" cy="7.2" r="2.3" fill="#0a0a0a"/><circle cx="10.1" cy="2.5" r="1.7" fill="#0a0a0a"/><circle cx="10.9" cy="9.3" r="3.5" fill="#0a0a0a"/></svg>
<div class="t" style="left:1570.50px;top:411.00px;height:16px;line-height:16px;font-size:11px;color:#505050;letter-spacing:0.574px;">Original</div>
<svg class="b" style="left:1701.00px;top:412.00px;" width="15" height="14" viewBox="0 0 15 14"><circle cx="2.7" cy="7.2" r="2.3" fill="#0a0a0a"/><circle cx="10.1" cy="2.5" r="1.7" fill="#0a0a0a"/><circle cx="10.9" cy="9.3" r="3.5" fill="#0a0a0a"/></svg>
<div class="t" style="left:1720.50px;top:411.00px;height:16px;line-height:16px;font-size:11px;color:#505050;letter-spacing:0.574px;">Original</div>
<div class="b" style="left:1855.80px;top:411.90px;width:16.30px;height:2.80px;background:#5a5a5a"></div>
<div class="b" style="left:1855.80px;top:417.60px;width:16.30px;height:2.80px;background:#5a5a5a"></div>
<div class="b" style="left:1855.80px;top:423.30px;width:16.30px;height:2.80px;background:#5a5a5a"></div>
<div class="b" style="left:222.00px;top:436.00px;width:14.00px;height:32.00px;background:#99cc00"></div>
<div class="b" style="left:222.00px;top:468.00px;width:14.00px;height:1.00px;background:#d6eb99"></div>
<div class="b" style="left:236.00px;top:468.00px;width:1666.00px;height:1.00px;background:#e6e6e6"></div>
<div class="b" style="left:242.00px;top:443.00px;width:19.00px;height:19.00px;background:#f1f1f1;border:1px solid #cdcdcd;border-radius:3.5px;box-sizing:border-box"></div>
<svg class="b" style="left:277.00px;top:446.00px;" width="7" height="12" viewBox="0 0 7 12"><path d="M0 0 L7 6 L0 12 Z" fill="#5c5c4e"/></svg>
<div class="t" style="left:294.00px;top:444.00px;height:16px;line-height:16px;font-size:11px;color:#505050;letter-spacing:0.382px;">9</div>
<div class="b" style="left:344.00px;top:449.00px;width:79.50px;height:6.00px;background:#f0f0f0;border-radius:3px"></div>
<div class="b" style="left:344.00px;top:449.00px;width:1.00px;height:6.00px;background:#ff7a14;border-radius:1px"></div>
<div class="t" style="left:429.50px;top:444.00px;height:16px;line-height:16px;font-size:11px;color:#505050;letter-spacing:0.882px;">428</div>
<div class="t" style="left:494.50px;top:436.00px;height:16px;line-height:16px;font-size:11px;color:#505050;letter-spacing:0.628px;">Default NAT</div>
<div class="t" style="left:494.50px;top:452.00px;height:16px;line-height:16px;font-size:11px;color:#505050;letter-spacing:0.458px;">Policy_11</div>
<div class="b" style="left:628.00px;top:443.90px;width:28.00px;height:16.00px;background:#d3e794;border-radius:8px"></div>
<div class="b" style="left:641.90px;top:445.80px;width:12.20px;height:12.20px;background:#fff;border-radius:50%"></div>
<svg class="b" style="left:683.10px;top:446.10px;" width="14" height="12" viewBox="0 0 14 12"><rect x="0" y="0" width="13.8" height="11.6" rx="2.2" fill="#585858"/><path d="M4.5 2.6 H9.5 V4.2 H11.7 V8.7 H2 V4.2 H4.5 Z" fill="#f6f6f6"/><g><rect x="3.2" y="6.6" width="0.9" height="2.1" fill="#e0b070"/><rect x="4.9" y="6.6" width="0.9" height="2.1" fill="#8fb0e0"/><rect x="6.6" y="6.6" width="0.9" height="2.1" fill="#e0b070"/><rect x="8.3" y="6.6" width="0.9" height="2.1" fill="#8fb0e0"/><rect x="10" y="6.6" width="0.9" height="2.1" fill="#e0b070"/></g></svg>
<div class="t" style="left:702.00px;top:444.00px;height:16px;line-height:16px;font-size:11px;color:#505050;letter-spacing:0.848px;">Any</div>
<svg class="b" style="left:816.10px;top:446.10px;" width="14" height="12" viewBox="0 0 14 12"><rect x="0" y="0" width="13.8" height="11.6" rx="2.2" fill="#585858"/><path d="M4.5 2.6 H9.5 V4.2 H11.7 V8.7 H2 V4.2 H4.5 Z" fill="#f6f6f6"/><g><rect x="3.2" y="6.6" width="0.9" height="2.1" fill="#e0b070"/><rect x="4.9" y="6.6" width="0.9" height="2.1" fill="#8fb0e0"/><rect x="6.6" y="6.6" width="0.9" height="2.1" fill="#e0b070"/><rect x="8.3" y="6.6" width="0.9" height="2.1" fill="#8fb0e0"/><rect x="10" y="6.6" width="0.9" height="2.1" fill="#e0b070"/></g></svg>
<div class="t" style="left:835.00px;top:444.00px;height:16px;line-height:16px;font-size:11px;color:#505050;letter-spacing:0.273px;">X1</div>
<svg class="b" style="left:950.00px;top:444.00px;" width="16" height="16" viewBox="0 0 16 16"><rect x="0.6" y="0.6" width="14.8" height="14.8" fill="none" stroke="#cf86c6" stroke-width="1" stroke-dasharray="2 1.6"/><path d="M5.2 2.6 C3 2.6 1.6 4.2 1.6 6 C1.6 8.2 3.6 10 5.2 12.6 C6.8 10 8.8 8.2 8.8 6 C8.8 4.2 7.4 2.6 5.2 2.6 Z M5.2 4.6 A1.5 1.5 0 1 1 5.2 7.6 A1.5 1.5 0 1 1 5.2 4.6Z" fill="#cf86c6" fill-rule="evenodd"/><path d="M11.3 1.6 C10 1.6 9.2 2.5 9.2 3.6 C9.2 4.9 10.4 6 11.3 7.6 C12.2 6 13.4 4.9 13.4 3.6 C13.4 2.5 12.6 1.6 11.3 1.6 Z M11.3 2.8 A0.9 0.9 0 1 1 11.3 4.6 A0.9 0.9 0 1 1 11.3 2.8Z" fill="#cf86c6" fill-rule="evenodd"/></svg>
<div class="t" style="left:969.50px;top:444.00px;height:16px;line-height:16px;font-size:11px;color:#505050;letter-spacing:0.498px;">All Interface IP</div>
<svg class="b" style="left:1100.50px;top:445.00px;" width="15" height="14" viewBox="0 0 15 14"><circle cx="2.7" cy="7.2" r="2.3" fill="#0a0a0a"/><circle cx="10.1" cy="2.5" r="1.7" fill="#0a0a0a"/><circle cx="10.9" cy="9.3" r="3.5" fill="#0a0a0a"/></svg>
<div class="t" style="left:1120.00px;top:444.00px;height:16px;line-height:16px;font-size:11px;color:#505050;letter-spacing:0.848px;">Any</div>
<svg class="b" style="left:1250.00px;top:445.00px;" width="15" height="14" viewBox="0 0 15 14"><circle cx="2.7" cy="7.2" r="2.3" fill="#0a0a0a"/><circle cx="10.1" cy="2.5" r="1.7" fill="#0a0a0a"/><circle cx="10.9" cy="9.3" r="3.5" fill="#0a0a0a"/></svg>
<div class="t" style="left:1269.50px;top:444.00px;height:16px;line-height:16px;font-size:11px;color:#505050;letter-spacing:0.848px;">Any</div>
<svg class="b" style="left:1402.00px;top:444.90px;" width="10" height="14" viewBox="0 0 10 14"><path d="M5 0 C2 0 0 2.1 0 4.8 C0 7.6 2.8 10.4 5 13.9 C7.2 10.4 10 7.6 10 4.8 C10 2.1 8 0 5 0 Z M5 3.2 A1.7 1.7 0 1 1 5 6.6 A1.7 1.7 0 1 1 5 3.2 Z" fill="#cc88c4" fill-rule="evenodd"/></svg>
<div class="t" style="left:1419.00px;top:444.00px;height:16px;line-height:16px;font-size:11px;color:#505050;letter-spacing:0.419px;">X1 IP</div>
<svg class="b" style="left:1551.00px;top:445.00px;" width="15" height="14" viewBox="0 0 15 14"><circle cx="2.7" cy="7.2" r="2.3" fill="#0a0a0a"/><circle cx="10.1" cy="2.5" r="1.7" fill="#0a0a0a"/><circle cx="10.9" cy="9.3" r="3.5" fill="#0a0a0a"/></svg>
<div class="t" style="left:1570.50px;top:444.00px;height:16px;line-height:16px;font-size:11px;color:#505050;letter-spacing:0.574px;">Original</div>
<svg class="b" style="left:1701.00px;top:445.00px;" width="15" height="14" viewBox="0 0 15 14"><circle cx="2.7" cy="7.2" r="2.3" fill="#0a0a0a"/><circle cx="10.1" cy="2.5" r="1.7" fill="#0a0a0a"/><circle cx="10.9" cy="9.3" r="3.5" fill="#0a0a0a"/></svg>
<div class="t" style="left:1720.50px;top:444.00px;height:16px;line-height:16px;font-size:11px;color:#505050;letter-spacing:0.574px;">Original</div>
<div class="b" style="left:1855.80px;top:444.90px;width:16.30px;height:2.80px;background:#5a5a5a"></div>
<div class="b" style="left:1855.80px;top:450.60px;width:16.30px;height:2.80px;background:#5a5a5a"></div>
<div class="b" style="left:1855.80px;top:456.30px;width:16.30px;height:2.80px;background:#5a5a5a"></div>
<div class="b" style="left:222.00px;top:469.00px;width:14.00px;height:32.00px;background:#99cc00"></div>
<div class="b" style="left:222.00px;top:501.00px;width:14.00px;height:1.00px;background:#d6eb99"></div>
<div class="b" style="left:236.00px;top:501.00px;width:1666.00px;height:1.00px;background:#e6e6e6"></div>
<div class="b" style="left:242.00px;top:476.00px;width:19.00px;height:19.00px;background:#f1f1f1;border:1px solid #cdcdcd;border-radius:3.5px;box-sizing:border-box"></div>
<svg class="b" style="left:277.00px;top:479.00px;" width="7" height="12" viewBox="0 0 7 12"><path d="M0 0 L7 6 L0 12 Z" fill="#5c5c4e"/></svg>
<div class="t" style="left:294.00px;top:477.00px;height:16px;line-height:16px;font-size:11px;color:#505050;letter-spacing:0.882px;">10</div>
<div class="b" style="left:344.00px;top:482.00px;width:79.50px;height:6.00px;background:#f0f0f0;border-radius:3px"></div>
<div class="b" style="left:344.00px;top:482.00px;width:1.00px;height:6.00px;background:#ff7a14;border-radius:1px"></div>
<div class="t" style="left:429.50px;top:477.00px;height:16px;line-height:16px;font-size:11px;color:#505050;letter-spacing:0.882px;">441</div>
<div class="t" style="left:494.50px;top:469.00px;height:16px;line-height:16px;font-size:11px;color:#505050;letter-spacing:0.628px;">Default NAT</div>
<div class="t" style="left:494.50px;top:485.00px;height:16px;line-height:16px;font-size:11px;color:#505050;letter-spacing:0.367px;">Policy_12</div>
<div class="b" style="left:628.00px;top:476.90px;width:28.00px;height:16.00px;background:#d3e794;border-radius:8px"></div>
<div class="b" style="left:641.90px;top:478.80px;width:12.20px;height:12.20px;background:#fff;border-radius:50%"></div>
<svg class="b" style="left:683.10px;top:479.10px;" width="14" height="12" viewBox="0 0 14 12"><rect x="0" y="0" width="13.8" height="11.6" rx="2.2" fill="#585858"/><path d="M4.5 2.6 H9.5 V4.2 H11.7 V8.7 H2 V4.2 H4.5 Z" fill="#f6f6f6"/><g><rect x="3.2" y="6.6" width="0.9" height="2.1" fill="#e0b070"/><rect x="4.9" y="6.6" width="0.9" height="2.1" fill="#8fb0e0"/><rect x="6.6" y="6.6" width="0.9" height="2.1" fill="#e0b070"/><rect x="8.3" y="6.6" width="0.9" height="2.1" fill="#8fb0e0"/><rect x="10" y="6.6" width="0.9" height="2.1" fill="#e0b070"/></g></svg>
<div class="t" style="left:702.00px;top:477.00px;height:16px;line-height:16px;font-size:11px;color:#505050;letter-spacing:0.273px;">X0</div>
<svg class="b" style="left:816.10px;top:479.10px;" width="14" height="12" viewBox="0 0 14 12"><rect x="0" y="0" width="13.8" height="11.6" rx="2.2" fill="#585858"/><path d="M4.5 2.6 H9.5 V4.2 H11.7 V8.7 H2 V4.2 H4.5 Z" fill="#f6f6f6"/><g><rect x="3.2" y="6.6" width="0.9" height="2.1" fill="#e0b070"/><rect x="4.9" y="6.6" width="0.9" height="2.1" fill="#8fb0e0"/><rect x="6.6" y="6.6" width="0.9" height="2.1" fill="#e0b070"/><rect x="8.3" y="6.6" width="0.9" height="2.1" fill="#8fb0e0"/><rect x="10" y="6.6" width="0.9" height="2.1" fill="#e0b070"/></g></svg>
<div class="t" style="left:835.00px;top:477.00px;height:16px;line-height:16px;font-size:11px;color:#505050;letter-spacing:0.273px;">X1</div>
<svg class="b" style="left:950.00px;top:478.00px;" width="15" height="14" viewBox="0 0 15 14"><circle cx="2.7" cy="7.2" r="2.3" fill="#0a0a0a"/><circle cx="10.1" cy="2.5" r="1.7" fill="#0a0a0a"/><circle cx="10.9" cy="9.3" r="3.5" fill="#0a0a0a"/></svg>
<div class="t" style="left:969.50px;top:477.00px;height:16px;line-height:16px;font-size:11px;color:#505050;letter-spacing:0.848px;">Any</div>
<svg class="b" style="left:1100.50px;top:478.00px;" width="15" height="14" viewBox="0 0 15 14"><circle cx="2.7" cy="7.2" r="2.3" fill="#0a0a0a"/><circle cx="10.1" cy="2.5" r="1.7" fill="#0a0a0a"/><circle cx="10.9" cy="9.3" r="3.5" fill="#0a0a0a"/></svg>
<div class="t" style="left:1120.00px;top:477.00px;height:16px;line-height:16px;font-size:11px;color:#505050;letter-spacing:0.848px;">Any</div>
<svg class="b" style="left:1250.00px;top:478.00px;" width="15" height="14" viewBox="0 0 15 14"><circle cx="2.7" cy="7.2" r="2.3" fill="#0a0a0a"/><circle cx="10.1" cy="2.5" r="1.7" fill="#0a0a0a"/><circle cx="10.9" cy="9.3" r="3.5" fill="#0a0a0a"/></svg>
<div class="t" style="left:1269.50px;top:477.00px;height:16px;line-height:16px;font-size:11px;color:#505050;letter-spacing:0.848px;">Any</div>
<svg class="b" style="left:1402.00px;top:477.90px;" width="10" height="14" viewBox="0 0 10 14"><path d="M5 0 C2 0 0 2.1 0 4.8 C0 7.6 2.8 10.4 5 13.9 C7.2 10.4 10 7.6 10 4.8 C10 2.1 8 0 5 0 Z M5 3.2 A1.7 1.7 0 1 1 5 6.6 A1.7 1.7 0 1 1 5 3.2 Z" fill="#cc88c4" fill-rule="evenodd"/></svg>
<div class="t" style="left:1419.00px;top:477.00px;height:16px;line-height:16px;font-size:11px;color:#505050;letter-spacing:0.419px;">X1 IP</div>
<svg class="b" style="left:1551.00px;top:478.00px;" width="15" height="14" viewBox="0 0 15 14"><circle cx="2.7" cy="7.2" r="2.3" fill="#0a0a0a"/><circle cx="10.1" cy="2.5" r="1.7" fill="#0a0a0a"/><circle cx="10.9" cy="9.3" r="3.5" fill="#0a0a0a"/></svg>
<div class="t" style="left:1570.50px;top:477.00px;height:16px;line-height:16px;font-size:11px;color:#505050;letter-spacing:0.574px;">Original</div>
<svg class="b" style="left:1701.00px;top:478.00px;" width="15" height="14" viewBox="0 0 15 14"><circle cx="2.7" cy="7.2" r="2.3" fill="#0a0a0a"/><circle cx="10.1" cy="2.5" r="1.7" fill="#0a0a0a"/><circle cx="10.9" cy="9.3" r="3.5" fill="#0a0a0a"/></svg>
<div class="t" style="left:1720.50px;top:477.00px;height:16px;line-height:16px;font-size:11px;color:#505050;letter-spacing:0.574px;">Original</div>
<div class="b" style="left:1855.80px;top:477.90px;width:16.30px;height:2.80px;background:#5a5a5a"></div>
<div class="b" style="left:1855.80px;top:483.60px;width:16.30px;height:2.80px;background:#5a5a5a"></div>
<div class="b" style="left:1855.80px;top:489.30px;width:16.30px;height:2.80px;background:#5a5a5a"></div>
<div class="b" style="left:222.00px;top:502.00px;width:14.00px;height:32.00px;background:#99cc00"></div>
<div class="b" style="left:222.00px;top:534.00px;width:14.00px;height:1.00px;background:#d6eb99"></div>
<div class="b" style="left:236.00px;top:534.00px;width:1666.00px;height:1.00px;background:#e6e6e6"></div>
<div class="b" style="left:242.00px;top:509.00px;width:19.00px;height:19.00px;background:#f1f1f1;border:1px solid #cdcdcd;border-radius:3.5px;box-sizing:border-box"></div>
<svg class="b" style="left:277.00px;top:512.00px;" width="7" height="12" viewBox="0 0 7 12"><path d="M0 0 L7 6 L0 12 Z" fill="#5c5c4e"/></svg>
<div class="t" style="left:294.00px;top:510.00px;height:16px;line-height:16px;font-size:11px;color:#505050;letter-spacing:0.290px;">11</div>
<div class="b" style="left:344.00px;top:515.00px;width:79.50px;height:6.00px;background:#f0f0f0;border-radius:3px"></div>
<div class="t" style="left:429.50px;top:510.00px;height:16px;line-height:16px;font-size:11px;color:#505050;letter-spacing:0.632px;">20</div>
<div class="t" style="left:494.50px;top:502.00px;height:16px;line-height:16px;font-size:11px;color:#505050;letter-spacing:0.628px;">Default NAT</div>
<div class="t" style="left:494.50px;top:518.00px;height:16px;line-height:16px;font-size:11px;color:#505050;letter-spacing:0.365px;">Policy_2</div>
<div class="b" style="left:628.00px;top:509.90px;width:28.00px;height:16.00px;background:#d3e794;border-radius:8px"></div>
<div class="b" style="left:641.90px;top:511.80px;width:12.20px;height:12.20px;background:#fff;border-radius:50%"></div>
<svg class="b" style="left:683.10px;top:512.10px;" width="14" height="12" viewBox="0 0 14 12"><rect x="0" y="0" width="13.8" height="11.6" rx="2.2" fill="#585858"/><path d="M4.5 2.6 H9.5 V4.2 H11.7 V8.7 H2 V4.2 H4.5 Z" fill="#f6f6f6"/><g><rect x="3.2" y="6.6" width="0.9" height="2.1" fill="#e0b070"/><rect x="4.9" y="6.6" width="0.9" height="2.1" fill="#8fb0e0"/><rect x="6.6" y="6.6" width="0.9" height="2.1" fill="#e0b070"/><rect x="8.3" y="6.6" width="0.9" height="2.1" fill="#8fb0e0"/><rect x="10" y="6.6" width="0.9" height="2.1" fill="#e0b070"/></g></svg>
<div class="t" style="left:702.00px;top:510.00px;height:16px;line-height:16px;font-size:11px;color:#505050;letter-spacing:0.848px;">Any</div>
<svg class="b" style="left:816.10px;top:512.10px;" width="14" height="12" viewBox="0 0 14 12"><rect x="0" y="0" width="13.8" height="11.6" rx="2.2" fill="#585858"/><path d="M4.5 2.6 H9.5 V4.2 H11.7 V8.7 H2 V4.2 H4.5 Z" fill="#f6f6f6"/><g><rect x="3.2" y="6.6" width="0.9" height="2.1" fill="#e0b070"/><rect x="4.9" y="6.6" width="0.9" height="2.1" fill="#8fb0e0"/><rect x="6.6" y="6.6" width="0.9" height="2.1" fill="#e0b070"/><rect x="8.3" y="6.6" width="0.9" height="2.1" fill="#8fb0e0"/><rect x="10" y="6.6" width="0.9" height="2.1" fill="#e0b070"/></g></svg>
<div class="t" style="left:835.00px;top:510.00px;height:16px;line-height:16px;font-size:11px;color:#505050;letter-spacing:0.848px;">Any</div>
<svg class="b" style="left:950.00px;top:511.00px;" width="15" height="14" viewBox="0 0 15 14"><circle cx="2.7" cy="7.2" r="2.3" fill="#0a0a0a"/><circle cx="10.1" cy="2.5" r="1.7" fill="#0a0a0a"/><circle cx="10.9" cy="9.3" r="3.5" fill="#0a0a0a"/></svg>
<div class="t" style="left:969.50px;top:510.00px;height:16px;line-height:16px;font-size:11px;color:#505050;letter-spacing:0.848px;">Any</div>
<svg class="b" style="left:1100.50px;top:511.00px;" width="15" height="14" viewBox="0 0 15 14"><circle cx="2.7" cy="7.2" r="2.3" fill="#0a0a0a"/><circle cx="10.1" cy="2.5" r="1.7" fill="#0a0a0a"/><circle cx="10.9" cy="9.3" r="3.5" fill="#0a0a0a"/></svg>
<div class="t" style="left:1120.00px;top:510.00px;height:16px;line-height:16px;font-size:11px;color:#505050;letter-spacing:0.848px;">Any</div>
<svg class="b" style="left:1250.00px;top:511.00px;" width="15" height="14" viewBox="0 0 15 14"><circle cx="2.7" cy="7.2" r="2.3" fill="#0a0a0a"/><circle cx="10.1" cy="2.5" r="1.7" fill="#0a0a0a"/><circle cx="10.9" cy="9.3" r="3.5" fill="#0a0a0a"/></svg>
<div class="t" style="left:1269.50px;top:510.00px;height:16px;line-height:16px;font-size:11px;color:#505050;letter-spacing:0.848px;">Any</div>
<svg class="b" style="left:1400.00px;top:511.00px;" width="15" height="14" viewBox="0 0 15 14"><circle cx="2.7" cy="7.2" r="2.3" fill="#0a0a0a"/><circle cx="10.1" cy="2.5" r="1.7" fill="#0a0a0a"/><circle cx="10.9" cy="9.3" r="3.5" fill="#0a0a0a"/></svg>
<div class="t" style="left:1419.50px;top:510.00px;height:16px;line-height:16px;font-size:11px;color:#505050;letter-spacing:0.574px;">Original</div>
<svg class="b" style="left:1551.00px;top:511.00px;" width="15" height="14" viewBox="0 0 15 14"><circle cx="2.7" cy="7.2" r="2.3" fill="#0a0a0a"/><circle cx="10.1" cy="2.5" r="1.7" fill="#0a0a0a"/><circle cx="10.9" cy="9.3" r="3.5" fill="#0a0a0a"/></svg>
<div class="t" style="left:1570.50px;top:510.00px;height:16px;line-height:16px;font-size:11px;color:#505050;letter-spacing:0.574px;">Original</div>
<svg class="b" style="left:1701.00px;top:511.00px;" width="15" height="14" viewBox="0 0 15 14"><circle cx="2.7" cy="7.2" r="2.3" fill="#0a0a0a"/><circle cx="10.1" cy="2.5" r="1.7" fill="#0a0a0a"/><circle cx="10.9" cy="9.3" r="3.5" fill="#0a0a0a"/></svg>
<div class="t" style="left:1720.50px;top:510.00px;height:16px;line-height:16px;font-size:11px;color:#505050;letter-spacing:0.574px;">Original</div>
<div class="b" style="left:1855.80px;top:510.90px;width:16.30px;height:2.80px;background:#5a5a5a"></div>
<div class="b" style="left:1855.80px;top:516.60px;width:16.30px;height:2.80px;background:#5a5a5a"></div>
<div class="b" style="left:1855.80px;top:522.30px;width:16.30px;height:2.80px;background:#5a5a5a"></div>
<div class="b" style="left:222.00px;top:535.00px;width:14.00px;height:32.00px;background:#99cc00"></div>
<div class="b" style="left:222.00px;top:567.00px;width:14.00px;height:1.00px;background:#d6eb99"></div>
<div class="b" style="left:236.00px;top:567.00px;width:1666.00px;height:1.00px;background:#e6e6e6"></div>
<div class="b" style="left:242.00px;top:542.00px;width:19.00px;height:19.00px;background:#f1f1f1;border:1px solid #cdcdcd;border-radius:3.5px;box-sizing:border-box"></div>
<svg class="b" style="left:277.00px;top:545.00px;" width="7" height="12" viewBox="0 0 7 12"><path d="M0 0 L7 6 L0 12 Z" fill="#5c5c4e"/></svg>
<div class="t" style="left:294.00px;top:543.00px;height:16px;line-height:16px;font-size:11px;color:#505050;letter-spacing:0.882px;">12</div>
<div class="b" style="left:344.00px;top:548.00px;width:79.50px;height:6.00px;background:#f0f0f0;border-radius:3px"></div>
<div class="t" style="left:429.50px;top:543.00px;height:16px;line-height:16px;font-size:11px;color:#505050;letter-spacing:0.382px;">6</div>
<div class="t" style="left:494.50px;top:535.00px;height:16px;line-height:16px;font-size:11px;color:#505050;letter-spacing:0.628px;">Default NAT</div>
<div class="t" style="left:494.50px;top:551.00px;height:16px;line-height:16px;font-size:11px;color:#505050;letter-spacing:0.365px;">Policy_1</div>
<div class="b" style="left:628.00px;top:542.90px;width:28.00px;height:16.00px;background:#d3e794;border-radius:8px"></div>
<div class="b" style="left:641.90px;top:544.80px;width:12.20px;height:12.20px;background:#fff;border-radius:50%"></div>
<svg class="b" style="left:683.10px;top:545.10px;" width="14" height="12" viewBox="0 0 14 12"><rect x="0" y="0" width="13.8" height="11.6" rx="2.2" fill="#585858"/><path d="M4.5 2.6 H9.5 V4.2 H11.7 V8.7 H2 V4.2 H4.5 Z" fill="#f6f6f6"/><g><rect x="3.2" y="6.6" width="0.9" height="2.1" fill="#e0b070"/><rect x="4.9" y="6.6" width="0.9" height="2.1" fill="#8fb0e0"/><rect x="6.6" y="6.6" width="0.9" height="2.1" fill="#e0b070"/><rect x="8.3" y="6.6" width="0.9" height="2.1" fill="#8fb0e0"/><rect x="10" y="6.6" width="0.9" height="2.1" fill="#e0b070"/></g></svg>
<div class="t" style="left:702.00px;top:543.00px;height:16px;line-height:16px;font-size:11px;color:#505050;letter-spacing:0.848px;">Any</div>
<svg class="b" style="left:816.10px;top:545.10px;" width="14" height="12" viewBox="0 0 14 12"><rect x="0" y="0" width="13.8" height="11.6" rx="2.2" fill="#585858"/><path d="M4.5 2.6 H9.5 V4.2 H11.7 V8.7 H2 V4.2 H4.5 Z" fill="#f6f6f6"/><g><rect x="3.2" y="6.6" width="0.9" height="2.1" fill="#e0b070"/><rect x="4.9" y="6.6" width="0.9" height="2.1" fill="#8fb0e0"/><rect x="6.6" y="6.6" width="0.9" height="2.1" fill="#e0b070"/><rect x="8.3" y="6.6" width="0.9" height="2.1" fill="#8fb0e0"/><rect x="10" y="6.6" width="0.9" height="2.1" fill="#e0b070"/></g></svg>
<div class="t" style="left:835.00px;top:543.00px;height:16px;line-height:16px;font-size:11px;color:#505050;letter-spacing:0.848px;">Any</div>
<svg class="b" style="left:950.00px;top:544.00px;" width="15" height="14" viewBox="0 0 15 14"><circle cx="2.7" cy="7.2" r="2.3" fill="#0a0a0a"/><circle cx="10.1" cy="2.5" r="1.7" fill="#0a0a0a"/><circle cx="10.9" cy="9.3" r="3.5" fill="#0a0a0a"/></svg>
<div class="t" style="left:969.50px;top:543.00px;height:16px;line-height:16px;font-size:11px;color:#505050;letter-spacing:0.848px;">Any</div>
<svg class="b" style="left:1100.50px;top:544.00px;" width="15" height="14" viewBox="0 0 15 14"><circle cx="2.7" cy="7.2" r="2.3" fill="#0a0a0a"/><circle cx="10.1" cy="2.5" r="1.7" fill="#0a0a0a"/><circle cx="10.9" cy="9.3" r="3.5" fill="#0a0a0a"/></svg>
<div class="t" style="left:1120.00px;top:543.00px;height:16px;line-height:16px;font-size:11px;color:#505050;letter-spacing:0.848px;">Any</div>
<svg class="b" style="left:1250.00px;top:544.00px;" width="15" height="14" viewBox="0 0 15 14"><circle cx="2.7" cy="7.2" r="2.3" fill="#0a0a0a"/><circle cx="10.1" cy="2.5" r="1.7" fill="#0a0a0a"/><circle cx="10.9" cy="9.3" r="3.5" fill="#0a0a0a"/></svg>
<div class="t" style="left:1269.50px;top:543.00px;height:16px;line-height:16px;font-size:11px;color:#505050;letter-spacing:0.848px;">Any</div>
<svg class="b" style="left:1400.00px;top:544.00px;" width="15" height="14" viewBox="0 0 15 14"><circle cx="2.7" cy="7.2" r="2.3" fill="#0a0a0a"/><circle cx="10.1" cy="2.5" r="1.7" fill="#0a0a0a"/><circle cx="10.9" cy="9.3" r="3.5" fill="#0a0a0a"/></svg>
<div class="t" style="left:1419.50px;top:543.00px;height:16px;line-height:16px;font-size:11px;color:#505050;letter-spacing:0.574px;">Original</div>
<svg class="b" style="left:1551.00px;top:544.00px;" width="15" height="14" viewBox="0 0 15 14"><circle cx="2.7" cy="7.2" r="2.3" fill="#0a0a0a"/><circle cx="10.1" cy="2.5" r="1.7" fill="#0a0a0a"/><circle cx="10.9" cy="9.3" r="3.5" fill="#0a0a0a"/></svg>
<div class="t" style="left:1570.50px;top:543.00px;height:16px;line-height:16px;font-size:11px;color:#505050;letter-spacing:0.574px;">Original</div>
<svg class="b" style="left:1701.00px;top:544.00px;" width="15" height="14" viewBox="0 0 15 14"><circle cx="2.7" cy="7.2" r="2.3" fill="#0a0a0a"/><circle cx="10.1" cy="2.5" r="1.7" fill="#0a0a0a"/><circle cx="10.9" cy="9.3" r="3.5" fill="#0a0a0a"/></svg>
<div class="t" style="left:1720.50px;top:543.00px;height:16px;line-height:16px;font-size:11px;color:#505050;letter-spacing:0.574px;">Original</div>
<div class="b" style="left:1855.80px;top:543.90px;width:16.30px;height:2.80px;background:#5a5a5a"></div>
<div class="b" style="left:1855.80px;top:549.60px;width:16.30px;height:2.80px;background:#5a5a5a"></div>
<div class="b" style="left:1855.80px;top:555.30px;width:16.30px;height:2.80px;background:#5a5a5a"></div>
<div class="b" style="left:222.00px;top:873.70px;width:1680.00px;height:1.60px;background:#ff7f1f"></div>
<div class="b" style="left:222.00px;top:875.30px;width:1680.00px;height:32.70px;background:#f9f9f9"></div>
<div class="b" style="left:224.20px;top:877.20px;width:82.60px;height:29.60px;border:2.8px solid #f6343b;box-sizing:border-box;box-shadow:1.6px 1.6px 2.5px rgba(0,0,0,.4), inset 1.6px 1.6px 2.5px rgba(0,0,0,.3);z-index:6"></div>
<svg class="b" style="left:243.00px;top:885.00px;" width="16" height="16" viewBox="0 0 16 16"><path d="M8 0.2 V15.8 M0.2 8 H15.8" stroke="#3a3a3a" stroke-width="2.1"/></svg>
<div class="t" style="left:265.00px;top:883.70px;height:20px;line-height:20px;font-size:13.2px;color:#2e2e2e;letter-spacing:0.671px;">Add</div>
<svg class="b" style="left:312.00px;top:884.00px;" width="18" height="18" viewBox="0 0 18 18"><path d="M1 17 L2.2 12.2 L11.5 2.9 L15.1 6.5 L5.8 15.8 Z M12.4 2 L13.6 0.8 C14.2 0.2 15 0.2 15.6 0.8 L17.2 2.4 C17.8 3 17.8 3.8 17.2 4.4 L16 5.6 Z" fill="#cecece"/></svg>
<div class="t" style="left:333.50px;top:883.70px;height:20px;line-height:20px;font-size:13.2px;color:#cecece;letter-spacing:0.564px;">Edit</div>
<svg class="b" style="left:381.00px;top:884.00px;" width="15" height="18" viewBox="0 0 15 18"><path d="M1.5 5 H13.5 L12.5 16.5 C12.4 17.3 11.8 17.8 11 17.8 H4 C3.2 17.8 2.6 17.3 2.5 16.5 Z" fill="#cecece"/><path d="M0.5 2.2 H5 L5.8 0.8 H9.2 L10 2.2 H14.5 V3.8 H0.5 Z" fill="#cecece"/></svg>
<div class="t" style="left:402.00px;top:883.70px;height:20px;line-height:20px;font-size:13.2px;color:#cecece;letter-spacing:0.307px;">Delete</div>
<div class="t" style="left:458.00px;top:883.70px;height:20px;line-height:20px;font-size:13.2px;color:#2e2e2e;font-weight:700;letter-spacing:-0.127px;text-decoration:underline;">Move:</div>
<svg class="b" style="left:507.10px;top:885.00px;" width="16" height="17" viewBox="0 0 16 17"><path d="M8 1.6 V15.9 M1.4 8.2 L8 1.6 L14.6 8.2" fill="none" stroke="#cecece" stroke-width="2"/></svg>
<div class="t" style="left:528.50px;top:883.70px;height:20px;line-height:20px;font-size:13.2px;color:#cecece;letter-spacing:0.563px;">Up</div>
<svg class="b" style="left:569.00px;top:885.00px;" width="16" height="17" viewBox="0 0 16 17"><path d="M8 0.4 V14.6 M1.4 8 L8 14.6 L14.6 8" fill="none" stroke="#cecece" stroke-width="2"/></svg>
<div class="t" style="left:590.20px;top:883.70px;height:20px;line-height:20px;font-size:13.2px;color:#cecece;letter-spacing:0.863px;">Down</div>
<div class="t" style="left:644.00px;top:883.70px;height:20px;line-height:20px;font-size:13.2px;color:#2e2e2e;font-weight:700;letter-spacing:-0.177px;text-decoration:underline;">Clone:</div>
<svg class="b" style="left:695.00px;top:885.00px;" width="16" height="17" viewBox="0 0 16 17"><path d="M8 1.6 V15.9 M1.4 8.2 L8 1.6 L14.6 8.2" fill="none" stroke="#cecece" stroke-width="2"/></svg>
<div class="t" style="left:716.50px;top:883.70px;height:20px;line-height:20px;font-size:13.2px;color:#cecece;letter-spacing:0.563px;">Up</div>
<svg class="b" style="left:756.80px;top:885.00px;" width="16" height="17" viewBox="0 0 16 17"><path d="M8 0.4 V14.6 M1.4 8 L8 14.6 L14.6 8" fill="none" stroke="#cecece" stroke-width="2"/></svg>
<div class="t" style="left:778.20px;top:883.70px;height:20px;line-height:20px;font-size:13.2px;color:#cecece;letter-spacing:0.863px;">Down</div>
<svg class="b" style="left:837.00px;top:884.50px;" width="17" height="17" viewBox="0 0 17 17"><circle cx="8.5" cy="8.5" r="7.5" fill="none" stroke="#333" stroke-width="1.5"/><path d="M6.3 4.8 L12 8.5 L6.3 12.2 Z" fill="#333"/></svg>
<div class="t" style="left:859.00px;top:883.70px;height:20px;line-height:20px;font-size:13.2px;color:#2e2e2e;letter-spacing:0.388px;">Live Counter</div>
<svg class="b" style="left:960.50px;top:884.50px;" width="17" height="17" viewBox="0 0 17 17"><g fill="#dcdcdc" stroke="#cecece" stroke-width="1.3" stroke-linejoin="round"><path id="bl" d="M8.5 8.6 C6.6 6.6 6.2 3.6 8 0.9 C11 2 12.4 4.6 11.8 7 C10.8 8 9.6 8.5 8.5 8.6 Z"/><path d="M8.5 8.6 C6.6 6.6 6.2 3.6 8 0.9 C11 2 12.4 4.6 11.8 7 C10.8 8 9.6 8.5 8.5 8.6 Z" transform="rotate(120 8.5 8.6)"/><path d="M8.5 8.6 C6.6 6.6 6.2 3.6 8 0.9 C11 2 12.4 4.6 11.8 7 C10.8 8 9.6 8.5 8.5 8.6 Z" transform="rotate(240 8.5 8.6)"/></g></svg>
<div class="t" style="left:981.50px;top:883.70px;height:20px;line-height:20px;font-size:13.2px;color:#cecece;letter-spacing:0.366px;">Clear counter</div>
<div class="t" style="left:1782.00px;top:881.90px;height:20px;line-height:20px;font-size:13px;color:#333;letter-spacing:0.272px;">Displaying 12 rules</div>
<svg class="b" style="left:257.00px;top:745.00px;z-index:6" width="100" height="135" viewBox="0 0 100 135"><defs><filter id="sh" x="-20%" y="-20%" width="150%" height="150%"><feDropShadow dx="1.6" dy="1.6" stdDeviation="1" flood-color="#000" flood-opacity=".35"/></filter></defs><g filter="url(#sh)"><path d="M88 7.5 L16.6 118.6" stroke="#f6343b" stroke-width="1.7" fill="none"/><path d="M11.2 128 L12.7 116.4 L20.2 121.4 Z" fill="#f6343b"/></g></svg>
</div></body></html>
